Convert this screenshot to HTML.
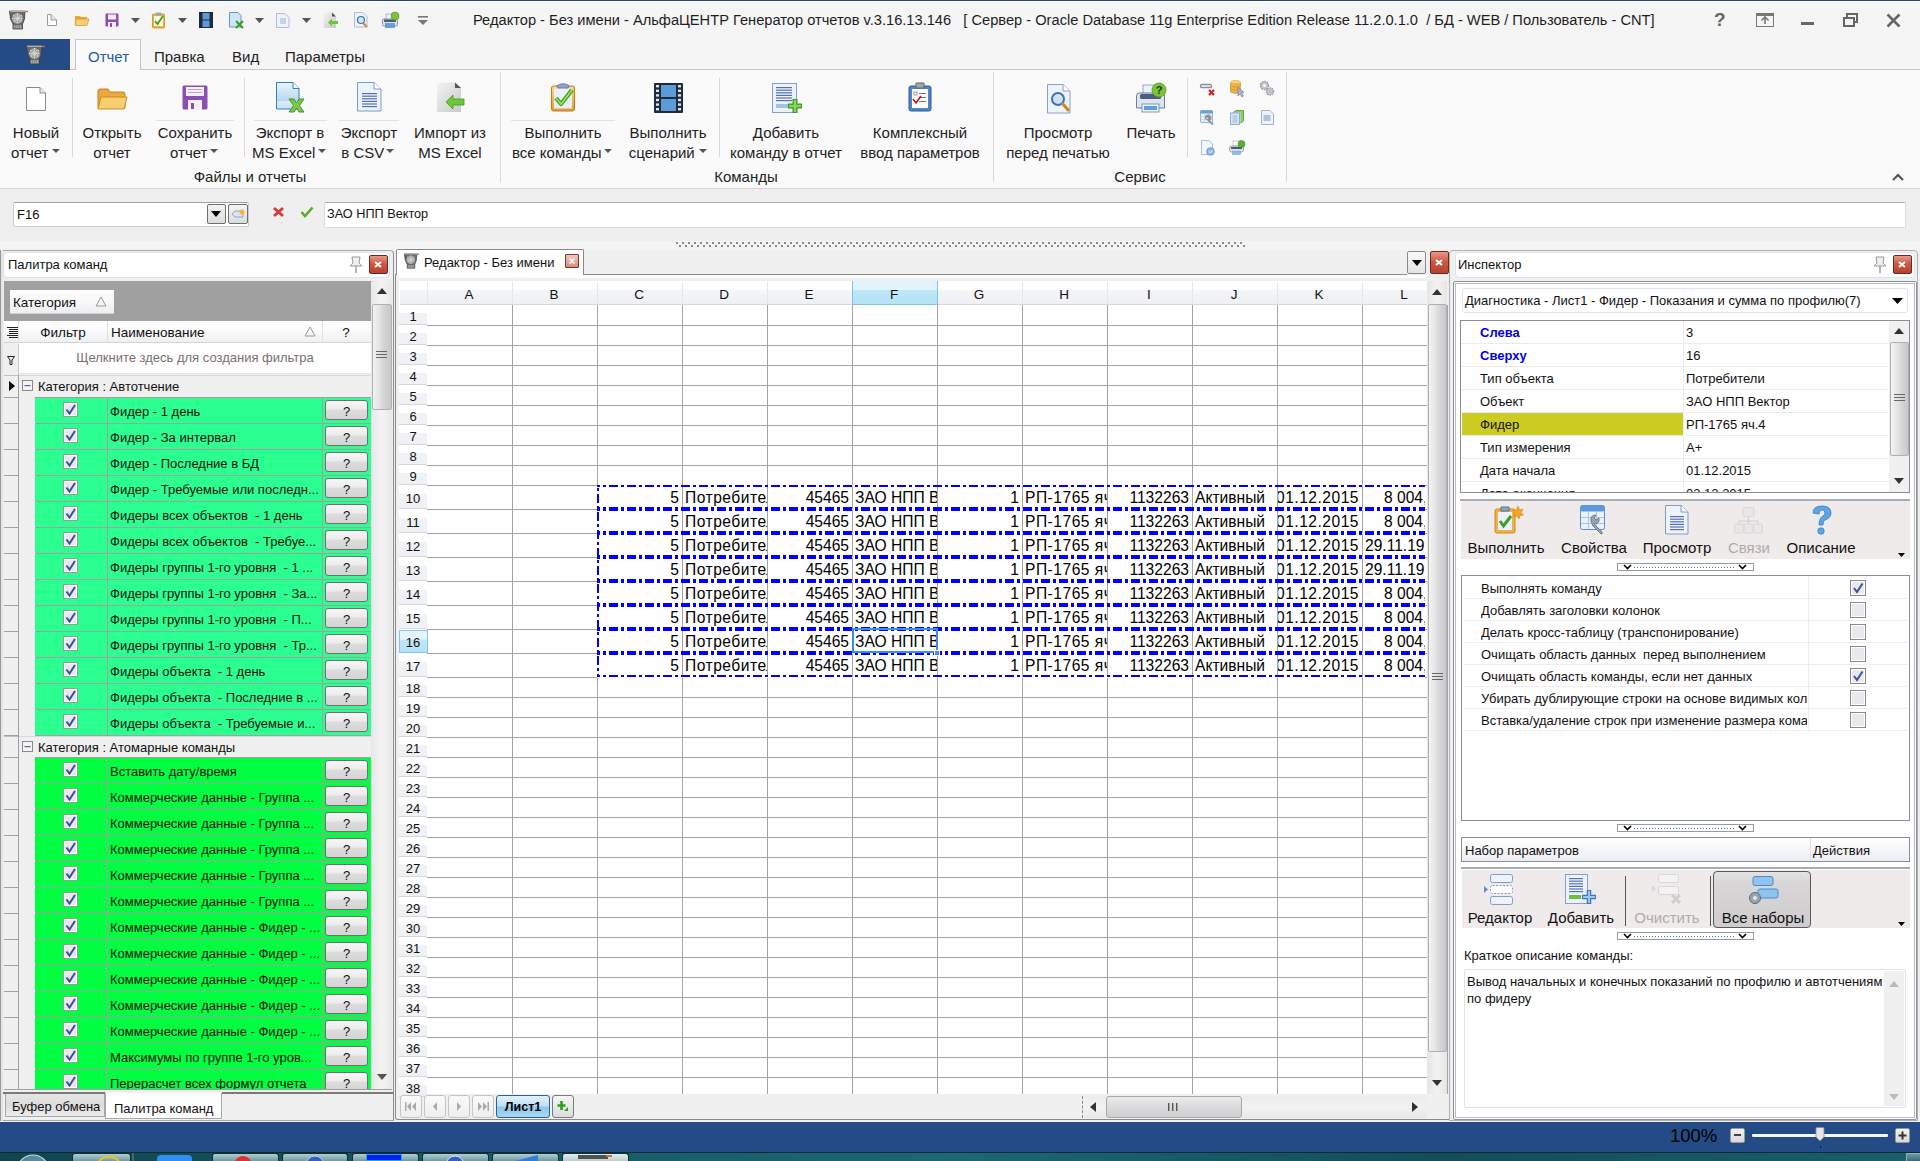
<!DOCTYPE html><html><head><meta charset="utf-8"><style>
*{margin:0;padding:0;box-sizing:border-box}
html,body{width:1920px;height:1161px;overflow:hidden;background:#f0f0f0;font-family:"Liberation Sans",sans-serif;color:#000}
div{position:absolute}
.t{white-space:nowrap;line-height:1}
svg{position:absolute;overflow:visible}
</style></head><body>

<div style="left:0px;top:0px;width:1920px;height:39px;background:#f5f5f5"></div>
<div style="left:0px;top:0px;width:1920px;height:1px;background:#24467a"></div>
<div style="left:0px;top:1px;width:1920px;height:1px;background:#ffffff"></div>
<svg style="left:9px;top:10px;" width="20" height="20" viewBox="0 0 20 20"><g transform="scale(1.0)"><path d="M0.5 1 H16 L15.5 9 L13.5 14 V19 H4 V14 L1.5 9Z" fill="#6a6a6a" stroke="#3a3a3a" stroke-width="0.8"/><circle cx="8.5" cy="8.5" r="5.8" fill="#a8a8a8" stroke="#555" stroke-width="0.6"/><path d="M4 5 L13 12 M13 5 L4 12 M8.5 3 V14 M3 8.5 H14" stroke="#e8e8e8" stroke-width="1" stroke-dasharray="1.2 1"/><circle cx="8.5" cy="8.5" r="2" fill="#d0d0d0"/><rect x="4.5" y="15" width="8.5" height="3.5" fill="#8a8a8a"/><path d="M5 16 H12 M5 17.5 H12" stroke="#c8c8c8" stroke-width="0.6" stroke-dasharray="1 1"/><path d="M16 1.5 H19" stroke="#d06a1a" stroke-width="1.4"/><path d="M1 1.2 H16" stroke="#d8d8d8" stroke-width="1"/></g></svg>
<svg style="left:47px;top:14px;" width="10" height="12" viewBox="0 0 10 12"><path d="M0.5 0.5 H4 L9.5 6 V11.5 H0.5 Z" fill="#fff" stroke="#9a9a9a"/><path d="M4 0.5 V6 H9.5" fill="#e8e8e8" stroke="#9a9a9a"/></svg>
<svg style="left:74px;top:14px;" width="16" height="12" viewBox="0 0 16 12"><path d="M1 2 H6 L7 3 H13 V11 H1Z" fill="#e9a93c"/><path d="M2 5 H15 L13 11.5 H1Z" fill="#f7cf70" stroke="#d18a22" stroke-width="0.6"/></svg>
<svg style="left:105px;top:13px;" width="14" height="14" viewBox="0 0 14 14"><rect x="0.5" y="0.5" width="13" height="13" rx="1" fill="#8b4fb0"/><rect x="3" y="1.5" width="8" height="5" fill="#f0eef4"/><rect x="3" y="9" width="8" height="5" fill="#f0eef4"/><rect x="5" y="10" width="2" height="4" fill="#8b4fb0"/></svg>
<svg style="left:131px;top:18px;" width="9" height="5" viewBox="0 0 9 5"><path d="M0 0 H9 L4.5 5Z" fill="#555"/></svg>
<svg style="left:152px;top:12px;" width="13" height="16" viewBox="0 0 13 16"><rect x="0.5" y="2" width="12" height="14" rx="1" fill="#f2b144" stroke="#c98a1f" stroke-width="0.8"/><rect x="2" y="4" width="9" height="10" fill="#fff8e8"/><path d="M3 9 L5.5 12 L11 4" stroke="#34a420" stroke-width="1.8" fill="none"/><rect x="4" y="0.5" width="5" height="3" fill="#8fa5c8"/></svg>
<svg style="left:178px;top:18px;" width="9" height="5" viewBox="0 0 9 5"><path d="M0 0 H9 L4.5 5Z" fill="#555"/></svg>
<svg style="left:199px;top:12px;" width="14" height="16" viewBox="0 0 14 16"><rect x="0" y="0" width="14" height="16" fill="#1e2a3e"/><rect x="3.5" y="1" width="7" height="6.5" fill="#5b9bd8"/><rect x="3.5" y="8.5" width="7" height="6.5" fill="#5b9bd8"/></svg>
<svg style="left:229px;top:12px;" width="15" height="16" viewBox="0 0 15 16"><path d="M0.5 0.5 H9 L12 3.5 V15 H0.5Z" fill="#cfe6f4" stroke="#3f83c2" stroke-width="0.8"/><path d="M7 9 L14 16 M14 9 L7 16" stroke="#3a9d2a" stroke-width="2"/></svg>
<svg style="left:255px;top:18px;" width="9" height="5" viewBox="0 0 9 5"><path d="M0 0 H9 L4.5 5Z" fill="#555"/></svg>
<svg style="left:276px;top:13px;" width="14" height="15" viewBox="0 0 14 15"><path d="M0.5 0.5 H9 L13 4.5 V14.5 H0.5Z" fill="#eef3fb" stroke="#9cb0d6" stroke-width="0.8"/><rect x="4" y="5" width="6" height="6" fill="#c5d3ea"/></svg>
<svg style="left:302px;top:18px;" width="9" height="5" viewBox="0 0 9 5"><path d="M0 0 H9 L4.5 5Z" fill="#555"/></svg>
<svg style="left:323px;top:12px;" width="16" height="17" viewBox="0 0 16 17"><defs><linearGradient id="gimq" x1="0" y1="0" x2="1" y2="1"><stop offset="0" stop-color="#f4f4f4"/><stop offset="1" stop-color="#c8c8c8"/></linearGradient></defs><path d="M0.5 0.5 H9 L13 4.5 V16 H0.5Z" fill="url(#gimq)"/><path d="M9 0.5 L13 4.5 H9Z" fill="#555"/><path d="M5 10.5 L9 6.5 V9 H15 V12 H9 V14.5Z" fill="#6cc834"/></svg>
<svg style="left:354px;top:12px;" width="14" height="16" viewBox="0 0 14 16"><path d="M0.5 0.5 H9 L13 4.5 V15 H0.5Z" fill="#eef3fb" stroke="#9cb0d6" stroke-width="0.8"/><circle cx="7" cy="8" r="3.5" fill="#cfe4f8" stroke="#3b73b9" stroke-width="1.2"/><path d="M9 11 L13 15" stroke="#c9882c" stroke-width="1.8"/></svg>
<svg style="left:382px;top:12px;" width="17" height="16" viewBox="0 0 17 16"><rect x="4" y="2" width="8" height="6" fill="#eef2f8" stroke="#7f93b8" stroke-width="0.6"/><rect x="0.5" y="7" width="15" height="7" rx="1.5" fill="#dce5f2" stroke="#6a7fa8" stroke-width="0.8"/><rect x="2" y="7.5" width="12" height="2.5" fill="#4f5d7c"/><rect x="3.5" y="11.5" width="9" height="4" fill="#5aa0e6" stroke="#6a7fa8" stroke-width="0.6"/><circle cx="13" cy="4" r="4" fill="#7cc23a" stroke="#4c9a1a" stroke-width="0.6"/></svg>
<svg style="left:418px;top:16px;" width="10" height="9" viewBox="0 0 10 9"><rect x="0" y="0" width="10" height="1.6" fill="#777"/><path d="M0 4 H10 L5 9Z" fill="#777"/></svg>
<div class="t" style="left:473px;top:13px;font-size:14.65px;color:#1e1e1e;">Редактор - Без имени - АльфаЦЕНТР Генератор отчетов v.3.16.13.146&nbsp;&nbsp; [ Сервер - Oracle Database 11g Enterprise Edition Release 11.2.0.1.0&nbsp; / БД - WEB / Пользователь - CNT]</div>
<div class="t" style="left:1714px;top:10px;font-size:19px;font-weight:bold;color:#666">?</div>
<svg style="left:1756px;top:13px;" width="18" height="14" viewBox="0 0 18 14"><rect x="0.5" y="0.5" width="17" height="13" fill="none" stroke="#777"/><rect x="0.5" y="0.5" width="17" height="2.5" fill="#777"/><path d="M9 4 V11 M5.5 7.5 L9 4 L12.5 7.5" stroke="#777" stroke-width="1.6" fill="none"/></svg>
<div style="left:1801px;top:22px;width:13px;height:3px;background:#666"></div>
<svg style="left:1843px;top:13px;" width="15" height="14" viewBox="0 0 15 14"><rect x="4" y="1" width="10" height="8" fill="none" stroke="#666" stroke-width="2"/><rect x="1" y="5" width="10" height="8" fill="#f5f5f5" stroke="#666" stroke-width="2"/></svg>
<svg style="left:1886px;top:13px;" width="15" height="15" viewBox="0 0 15 15"><path d="M1.5 1.5 L13.5 13.5 M13.5 1.5 L1.5 13.5" stroke="#666" stroke-width="2.6"/></svg>
<div style="left:0px;top:39px;width:1920px;height:31px;background:#f5f5f5"></div>
<div style="left:70px;top:69px;width:1850px;height:1px;background:#c6c6c6"></div>
<div style="left:0px;top:39px;width:70px;height:31px;background:#254b87"></div>
<svg style="left:26px;top:45px;" width="20" height="20" viewBox="0 0 20 20"><g transform="scale(1.0)"><path d="M0.5 1 H16 L15.5 9 L13.5 14 V19 H4 V14 L1.5 9Z" fill="#6a6a6a" stroke="#3a3a3a" stroke-width="0.8"/><circle cx="8.5" cy="8.5" r="5.8" fill="#a8a8a8" stroke="#555" stroke-width="0.6"/><path d="M4 5 L13 12 M13 5 L4 12 M8.5 3 V14 M3 8.5 H14" stroke="#e8e8e8" stroke-width="1" stroke-dasharray="1.2 1"/><circle cx="8.5" cy="8.5" r="2" fill="#d0d0d0"/><rect x="4.5" y="15" width="8.5" height="3.5" fill="#8a8a8a"/><path d="M5 16 H12 M5 17.5 H12" stroke="#c8c8c8" stroke-width="0.6" stroke-dasharray="1 1"/><path d="M16 1.5 H19" stroke="#d06a1a" stroke-width="1.4"/><path d="M1 1.2 H16" stroke="#d8d8d8" stroke-width="1"/></g></svg>
<div style="left:75px;top:39px;width:66px;height:31px;background:#fafafa;border:1px solid #c6c6c6;border-bottom:none"></div>
<div class="t" style="left:88px;top:49px;font-size:15px;color:#2b5ba8">Отчет</div>
<div class="t" style="left:154px;top:49px;font-size:15px;color:#222">Правка</div>
<div class="t" style="left:232px;top:49px;font-size:15px;color:#222">Вид</div>
<div class="t" style="left:285px;top:49px;font-size:15px;color:#222">Параметры</div>
<div style="left:0px;top:70px;width:1920px;height:118px;background:#fafafa"></div>
<div style="left:0px;top:188px;width:1920px;height:1px;background:#d5d5d5"></div>
<svg style="left:26px;top:87px;" width="20" height="24" viewBox="0 0 20 24"><path d="M0.5 0.5 H14 L19.5 6 V23.5 H0.5 Z" fill="#fff" stroke="#8a8a8a"/><path d="M14 0.5 V6 H19.5" fill="#e8e8e8" stroke="#8a8a8a"/></svg>
<div class="t" style="left:-264px;width:600px;text-align:center;top:125px;font-size:15px;color:#222">Новый</div>
<div class="t" style="left:-264px;width:600px;text-align:center;top:145px;font-size:15px;color:#222">отчет&nbsp;&nbsp;&nbsp;</div>
<svg style="left:52px;top:149px;" width="8" height="4" viewBox="0 0 8 4"><path d="M0 0 H8 L4 4Z" fill="#555"/></svg>
<div style="left:72px;top:78px;width:1px;height:79px;background:#d8d8d8"></div>
<svg style="left:97px;top:88px;" width="31" height="22" viewBox="0 0 31 22"><path d="M1 3 Q1 1 3 1 H11 L13 4 H26 Q28 4 28 6 V20 H1 Z" fill="#e9a93c" stroke="#c9801e"/><path d="M4 9 H30 L27 21 H1 Z" fill="#f7cf70" stroke="#d18a22"/></svg>
<div class="t" style="left:-188px;width:600px;text-align:center;top:125px;font-size:15px;color:#222">Открыть</div>
<div class="t" style="left:-188px;width:600px;text-align:center;top:145px;font-size:15px;color:#222">отчет</div>
<svg style="left:182px;top:85px;" width="26" height="25" viewBox="0 0 26 25"><rect x="0.5" y="0.5" width="25" height="24" rx="1.5" fill="#8b4fb0"/><rect x="4" y="2" width="18" height="9" fill="#f4f1f6"/><rect x="6" y="4" width="14" height="1" fill="#b8a8c8"/><rect x="6" y="7" width="14" height="1" fill="#b8a8c8"/><rect x="6" y="15" width="14" height="10" fill="#f4f1f6"/><rect x="9" y="18" width="3" height="6" fill="#8b4fb0"/></svg>
<div style="left:156px;top:120px;width:78px;height:1px;background:#e2e2e2"></div>
<div class="t" style="left:-105px;width:600px;text-align:center;top:125px;font-size:15px;color:#222">Сохранить</div>
<div class="t" style="left:-105px;width:600px;text-align:center;top:145px;font-size:15px;color:#222">отчет&nbsp;&nbsp;&nbsp;</div>
<svg style="left:210px;top:149px;" width="8" height="4" viewBox="0 0 8 4"><path d="M0 0 H8 L4 4Z" fill="#555"/></svg>
<div style="left:244px;top:78px;width:1px;height:79px;background:#d8d8d8"></div>
<svg style="left:276px;top:82px;" width="29" height="31" viewBox="0 0 29 31"><defs><linearGradient id="gex" x1="0" y1="0" x2="0" y2="1"><stop offset="0" stop-color="#e8f4fb"/><stop offset="0.7" stop-color="#b8d8ee"/><stop offset="0.72" stop-color="#d8ecf8"/><stop offset="1" stop-color="#c8e2f4"/></linearGradient></defs><path d="M0.5 0.5 H17 L23 6.5 V27 H0.5 Z" fill="url(#gex)" stroke="#2f7fc8"/><path d="M17 0.5 V6.5 H23" fill="#fff" stroke="#2f7fc8"/><path d="M13 17 H18 L20.5 21 L23 17 H28 L23.5 23.5 L28 30 H23 L20.5 26 L18 30 H13 L17.5 23.5Z" fill="#7cc848" stroke="#3a8a20" stroke-width="0.9"/></svg>
<div style="left:254px;top:120px;width:73px;height:1px;background:#e2e2e2"></div>
<div class="t" style="left:-10px;width:600px;text-align:center;top:125px;font-size:15px;color:#222">Экспорт в</div>
<div class="t" style="left:-10px;width:600px;text-align:center;top:145px;font-size:15px;color:#222">MS Excel&nbsp;&nbsp;&nbsp;</div>
<svg style="left:318px;top:149px;" width="8" height="4" viewBox="0 0 8 4"><path d="M0 0 H8 L4 4Z" fill="#555"/></svg>
<svg style="left:357px;top:82px;" width="25" height="30" viewBox="0 0 25 30"><path d="M0.5 0.5 H17 L24 7 V29 H0.5 Z" fill="#eef3fb" stroke="#7f9bd0"/><path d="M17 0.5 V7 H24" fill="#fff" stroke="#7f9bd0"/><rect x="5" y="11.0" width="15" height="1.2" fill="#5572b0"/><rect x="5" y="13.6" width="15" height="1.2" fill="#5572b0"/><rect x="5" y="16.2" width="15" height="1.2" fill="#5572b0"/><rect x="5" y="18.8" width="15" height="1.2" fill="#5572b0"/><rect x="5" y="21.4" width="15" height="1.2" fill="#5572b0"/><rect x="5" y="24.0" width="15" height="1.2" fill="#5572b0"/></svg>
<div style="left:339px;top:120px;width:60px;height:1px;background:#e2e2e2"></div>
<div class="t" style="left:69px;width:600px;text-align:center;top:125px;font-size:15px;color:#222">Экспорт</div>
<div class="t" style="left:69px;width:600px;text-align:center;top:145px;font-size:15px;color:#222">в CSV&nbsp;&nbsp;&nbsp;</div>
<svg style="left:386px;top:149px;" width="8" height="4" viewBox="0 0 8 4"><path d="M0 0 H8 L4 4Z" fill="#555"/></svg>
<svg style="left:435px;top:82px;" width="30" height="31" viewBox="0 0 30 31"><defs><linearGradient id="gimp" x1="0" y1="0" x2="1" y2="1"><stop offset="0" stop-color="#f4f4f4"/><stop offset="1" stop-color="#c8c8c8"/></linearGradient></defs><path d="M2 0.5 H20 L26 6 V30 H2 Z" fill="url(#gimp)"/><path d="M20 0.5 L26 6 H20Z" fill="#555"/><path d="M11 20 L18 13 V17 H29 V23 H18 V27 Z" fill="#6cc834" stroke="#3e9a18" stroke-width="0.8"/></svg>
<div class="t" style="left:150px;width:600px;text-align:center;top:125px;font-size:15px;color:#222">Импорт из</div>
<div class="t" style="left:150px;width:600px;text-align:center;top:145px;font-size:15px;color:#222">MS Excel</div>
<div class="t" style="left:-50px;width:600px;text-align:center;top:169px;font-size:15px;color:#222">Файлы и отчеты</div>
<div style="left:500px;top:72px;width:1px;height:110px;background:#d8d8d8"></div>
<svg style="left:551px;top:83px;" width="24" height="29" viewBox="0 0 24 29"><defs><linearGradient id="gcl" x1="0" y1="0" x2="0" y2="1"><stop offset="0" stop-color="#fbd98a"/><stop offset="1" stop-color="#e39a30"/></linearGradient></defs><rect x="0.5" y="3" width="23" height="25" rx="2" fill="url(#gcl)" stroke="#c47a18"/><rect x="3" y="5.5" width="18" height="20" fill="#eaf0f8"/><path d="M6.0 2.5 Q12.0 -1 18.0 2.5 L17.0 5 H7.0Z" fill="#8fa5c8" stroke="#5b6f93" stroke-width="0.8"/><path d="M5 15 L10 21 L21 7" stroke="#3f9a1e" stroke-width="4.2" fill="none" stroke-linejoin="round"/><path d="M5 15 L10 21 L21 7" stroke="#9ee05e" stroke-width="1.8" fill="none"/></svg>
<div style="left:511px;top:120px;width:104px;height:1px;background:#e2e2e2"></div>
<div class="t" style="left:263px;width:600px;text-align:center;top:125px;font-size:15px;color:#222">Выполнить</div>
<div class="t" style="left:263px;width:600px;text-align:center;top:145px;font-size:15px;color:#222">все команды&nbsp;&nbsp;&nbsp;</div>
<svg style="left:604px;top:149px;" width="8" height="4" viewBox="0 0 8 4"><path d="M0 0 H8 L4 4Z" fill="#555"/></svg>
<svg style="left:654px;top:83px;" width="29" height="30" viewBox="0 0 29 30"><rect x="0" y="0" width="29" height="30" rx="1" fill="#1e2a3e"/><rect x="7" y="2" width="15" height="12" fill="#5b9bd8"/><rect x="7" y="16" width="15" height="12" fill="#5b9bd8"/><rect x="2" y="2.0" width="3" height="2.4" fill="#dfe6ef"/><rect x="24" y="2.0" width="3" height="2.4" fill="#dfe6ef"/><rect x="2" y="6.6" width="3" height="2.4" fill="#dfe6ef"/><rect x="24" y="6.6" width="3" height="2.4" fill="#dfe6ef"/><rect x="2" y="11.2" width="3" height="2.4" fill="#dfe6ef"/><rect x="24" y="11.2" width="3" height="2.4" fill="#dfe6ef"/><rect x="2" y="15.799999999999999" width="3" height="2.4" fill="#dfe6ef"/><rect x="24" y="15.799999999999999" width="3" height="2.4" fill="#dfe6ef"/><rect x="2" y="20.4" width="3" height="2.4" fill="#dfe6ef"/><rect x="24" y="20.4" width="3" height="2.4" fill="#dfe6ef"/><rect x="2" y="25.0" width="3" height="2.4" fill="#dfe6ef"/><rect x="24" y="25.0" width="3" height="2.4" fill="#dfe6ef"/></svg>
<div class="t" style="left:368px;width:600px;text-align:center;top:125px;font-size:15px;color:#222">Выполнить</div>
<div class="t" style="left:368px;width:600px;text-align:center;top:145px;font-size:15px;color:#222">сценарий&nbsp;&nbsp;&nbsp;</div>
<svg style="left:699px;top:149px;" width="8" height="4" viewBox="0 0 8 4"><path d="M0 0 H8 L4 4Z" fill="#555"/></svg>
<div style="left:719px;top:78px;width:1px;height:79px;background:#d8d8d8"></div>
<svg style="left:772px;top:83px;" width="31" height="31" viewBox="0 0 31 31"><rect x="0.5" y="0.5" width="24" height="29" fill="#eef3fb" stroke="#8aa0c8"/><rect x="4" y="4.0" width="16" height="1.2" fill="#5572b0"/><rect x="4" y="6.6" width="16" height="1.2" fill="#5572b0"/><rect x="4" y="9.2" width="16" height="1.2" fill="#5572b0"/><rect x="4" y="11.8" width="16" height="1.2" fill="#5572b0"/><rect x="4" y="14.4" width="16" height="1.2" fill="#5572b0"/><rect x="4" y="17.0" width="16" height="1.2" fill="#5572b0"/><rect x="4" y="21" width="14" height="4" fill="#9fc3e8"/><path d="M23 16 V30 M16 23 H30" stroke="#3d9a20" stroke-width="5"/><path d="M23 17 V29 M17 23 H29" stroke="#8bd45e" stroke-width="2.4"/></svg>
<div class="t" style="left:486px;width:600px;text-align:center;top:125px;font-size:15px;color:#222">Добавить</div>
<div class="t" style="left:486px;width:600px;text-align:center;top:145px;font-size:15px;color:#222">команду в отчет</div>
<svg style="left:908px;top:82px;" width="24" height="30" viewBox="0 0 24 30"><rect x="1" y="4" width="22" height="25" rx="2" fill="#4f86c6" stroke="#2a5b99"/><rect x="4" y="7" width="16" height="19" fill="#fff"/><path d="M8 1 H16 V6 H8Z" fill="#9aa" stroke="#666"/><rect x="6" y="10" width="3" height="3" fill="none" stroke="#888" stroke-width="0.8"/><rect x="11" y="11" width="7" height="1" fill="#777"/><rect x="11" y="15" width="7" height="1" fill="#777"/><rect x="11" y="19" width="7" height="1" fill="#777"/><path d="M5 17 L8 21 L13 14" stroke="#d01010" stroke-width="1.6" fill="none"/></svg>
<div class="t" style="left:620px;width:600px;text-align:center;top:125px;font-size:15px;color:#222">Комплексный</div>
<div class="t" style="left:620px;width:600px;text-align:center;top:145px;font-size:15px;color:#222">ввод параметров</div>
<div class="t" style="left:446px;width:600px;text-align:center;top:169px;font-size:15px;color:#222">Команды</div>
<div style="left:993px;top:72px;width:1px;height:110px;background:#d8d8d8"></div>
<svg style="left:1047px;top:84px;" width="24" height="30" viewBox="0 0 24 30"><path d="M0.5 0.5 H16 L23 7 V29 H0.5 Z" fill="#eef3fb" stroke="#8aa0c8"/><path d="M16 0.5 V7 H23" fill="#fff" stroke="#8aa0c8"/><circle cx="11" cy="15" r="6" fill="#cfe4f8" stroke="#3b73b9" stroke-width="2"/><path d="M15 19 L22 27" stroke="#c9882c" stroke-width="3"/></svg>
<div class="t" style="left:758px;width:600px;text-align:center;top:125px;font-size:15px;color:#222">Просмотр</div>
<div class="t" style="left:758px;width:600px;text-align:center;top:145px;font-size:15px;color:#222">перед печатью</div>
<svg style="left:1136px;top:83px;" width="30" height="30" viewBox="0 0 30 30"><rect x="7" y="2" width="14" height="10" fill="#eef2f8" stroke="#7f93b8" stroke-width="0.8"/><path d="M0.5 13 Q0.5 10 3.5 10 H25.5 Q28.5 10 28.5 13 V25 H0.5Z" fill="#dce5f2" stroke="#6a7fa8"/><rect x="4" y="11" width="21" height="5" rx="1.5" fill="#4f5d7c"/><rect x="6" y="21" width="17" height="8" fill="#eef3fa" stroke="#6a7fa8" stroke-width="0.8"/><rect x="8" y="23" width="13" height="4" fill="#5aa0e6"/><circle cx="23" cy="7" r="7" fill="#7cc23a" stroke="#4c9a1a" stroke-width="0.8"/><text x="23" y="11" font-size="11" font-weight="bold" text-anchor="middle" fill="#1e3a10" font-family="Liberation Sans">?</text></svg>
<div class="t" style="left:851px;width:600px;text-align:center;top:125px;font-size:15px;color:#222">Печать</div>
<div style="left:1187px;top:78px;width:1px;height:79px;background:#d8d8d8"></div>
<svg style="left:1199px;top:82px;" width="16" height="14" viewBox="0 0 16 14"><path d="M3 4 H11" stroke="#8a8e96" stroke-width="4.5" stroke-linecap="round"/><path d="M3 4 H11" stroke="#d8dce2" stroke-width="2" stroke-linecap="round"/><path d="M10 8 L15 13 M15 8 L10 13" stroke="#d42020" stroke-width="2.2"/></svg>
<svg style="left:1230px;top:80px;" width="16" height="17" viewBox="0 0 16 17"><ellipse cx="5.5" cy="3" rx="5" ry="2.5" fill="#f8d77a" stroke="#d09a30" stroke-width="0.6"/><path d="M0.5 3 V12 Q5.5 15 10.5 12 V3" fill="#eeb445" stroke="#c98a25" stroke-width="0.6"/><path d="M0.5 6 Q5.5 8.5 10.5 6 M0.5 9 Q5.5 11.5 10.5 9" stroke="#c98a25" stroke-width="0.6" fill="none"/><path d="M8 7 V16 L10 14 L12 17 L13.5 16 L11.5 13 L14 12.5Z" fill="#a8b4c8" stroke="#6a7890" stroke-width="0.6"/></svg>
<svg style="left:1259px;top:80px;" width="16" height="16" viewBox="0 0 16 16"><circle cx="5.5" cy="5.5" r="4" fill="#c8c8c8" stroke="#9a9a9a" stroke-width="1.6" stroke-dasharray="1.6 1"/><circle cx="5.5" cy="5.5" r="1.6" fill="#f4f4f4"/><circle cx="11" cy="11.5" r="3.6" fill="#c0c4cc" stroke="#9a9ea6" stroke-width="1.4" stroke-dasharray="1.4 0.9"/></svg>
<svg style="left:1200px;top:110px;" width="15" height="15" viewBox="0 0 15 15"><rect x="0.5" y="0.5" width="12" height="12" rx="1" fill="#eef2f8" stroke="#7f9bd0" stroke-width="0.8"/><rect x="0.5" y="0.5" width="12" height="3" fill="#6aa0dc"/><path d="M4.5 3.5 V12.5 M8.5 3.5 V12.5 M0.5 6.5 H12.5 M0.5 9.5 H12.5" stroke="#b8cce8" stroke-width="0.6"/><path d="M6 9 Q5 5 9 5.5 L8 7 L9 8 L10.5 7 Q11 10 8 10 L13 14.5" stroke="#8a929c" stroke-width="1.8" fill="none"/></svg>
<svg style="left:1230px;top:110px;" width="15" height="15" viewBox="0 0 15 15"><path d="M4 2 L6 0.5 H13.5 V11 L11 13" fill="#8ed06a" stroke="#4aa02a" stroke-width="0.8"/><path d="M3 2 H11 V13 H3Z" fill="#d8e8d0" stroke="#70b050" stroke-width="0.6"/><rect x="0.5" y="3" width="9" height="11.5" fill="#dae6f4" stroke="#7f9bd0" stroke-width="0.8"/><rect x="2.5" y="5" width="5" height="8" fill="#b8cde8"/></svg>
<svg style="left:1261px;top:110px;" width="13" height="15" viewBox="0 0 13 15"><path d="M0.5 0.5 H9 L12.5 4 V14.5 H0.5Z" fill="#eef3fb" stroke="#8aa0c8" stroke-width="0.8"/><rect x="2.5" y="5" width="7" height="6" fill="#b0c2de"/></svg>
<svg style="left:1201px;top:140px;" width="15" height="16" viewBox="0 0 15 16"><path d="M0.5 0.5 H8 L11.5 4 V14.5 H0.5Z" fill="#f2f5fa" stroke="#9cb0d6" stroke-width="0.8"/><circle cx="9.5" cy="11.5" r="3.8" fill="#8cb8ec" stroke="#5a8ad0" stroke-width="0.8"/><path d="M7.5 11.5 L9.5 13 L11.5 10" stroke="#fff" stroke-width="0.8" fill="none"/></svg>
<svg style="left:1229px;top:140px;" width="17" height="16" viewBox="0 0 17 16"><rect x="4" y="1" width="8" height="5" fill="#fff" stroke="#9aa" stroke-width="0.6"/><rect x="0.5" y="6" width="14" height="6" rx="2" fill="#dfe4ec" stroke="#8a98aa" stroke-width="0.8"/><rect x="2" y="7" width="11" height="2" fill="#4a5a78"/><rect x="3.5" y="11" width="8" height="3.5" fill="#8cc0ec" stroke="#8a98aa" stroke-width="0.5"/><circle cx="12.5" cy="4" r="3.5" fill="#5cb030" stroke="#3a8a18" stroke-width="0.6"/></svg>
<div style="left:1286px;top:72px;width:1px;height:110px;background:#d8d8d8"></div>
<div class="t" style="left:840px;width:600px;text-align:center;top:169px;font-size:15px;color:#222">Сервис</div>
<svg style="left:1892px;top:173px;" width="12" height="8" viewBox="0 0 12 8"><path d="M1 7 L6 2 L11 7" stroke="#555" stroke-width="2.2" fill="none"/></svg>
<div style="left:0px;top:189px;width:1920px;height:52px;background:#efefef"></div>
<div style="left:0px;top:241px;width:1920px;height:9px;background:#f4f4f4"></div>
<svg style="left:676px;top:242px;" width="570" height="6" viewBox="0 0 570 6"><rect x="0" y="0" width="2" height="2" fill="#8a8a8a"/><rect x="3" y="3" width="2" height="2" fill="#8a8a8a"/><rect x="6" y="0" width="2" height="2" fill="#8a8a8a"/><rect x="9" y="3" width="2" height="2" fill="#8a8a8a"/><rect x="12" y="0" width="2" height="2" fill="#8a8a8a"/><rect x="15" y="3" width="2" height="2" fill="#8a8a8a"/><rect x="18" y="0" width="2" height="2" fill="#8a8a8a"/><rect x="21" y="3" width="2" height="2" fill="#8a8a8a"/><rect x="24" y="0" width="2" height="2" fill="#8a8a8a"/><rect x="27" y="3" width="2" height="2" fill="#8a8a8a"/><rect x="30" y="0" width="2" height="2" fill="#8a8a8a"/><rect x="33" y="3" width="2" height="2" fill="#8a8a8a"/><rect x="36" y="0" width="2" height="2" fill="#8a8a8a"/><rect x="39" y="3" width="2" height="2" fill="#8a8a8a"/><rect x="42" y="0" width="2" height="2" fill="#8a8a8a"/><rect x="45" y="3" width="2" height="2" fill="#8a8a8a"/><rect x="48" y="0" width="2" height="2" fill="#8a8a8a"/><rect x="51" y="3" width="2" height="2" fill="#8a8a8a"/><rect x="54" y="0" width="2" height="2" fill="#8a8a8a"/><rect x="57" y="3" width="2" height="2" fill="#8a8a8a"/><rect x="60" y="0" width="2" height="2" fill="#8a8a8a"/><rect x="63" y="3" width="2" height="2" fill="#8a8a8a"/><rect x="66" y="0" width="2" height="2" fill="#8a8a8a"/><rect x="69" y="3" width="2" height="2" fill="#8a8a8a"/><rect x="72" y="0" width="2" height="2" fill="#8a8a8a"/><rect x="75" y="3" width="2" height="2" fill="#8a8a8a"/><rect x="78" y="0" width="2" height="2" fill="#8a8a8a"/><rect x="81" y="3" width="2" height="2" fill="#8a8a8a"/><rect x="84" y="0" width="2" height="2" fill="#8a8a8a"/><rect x="87" y="3" width="2" height="2" fill="#8a8a8a"/><rect x="90" y="0" width="2" height="2" fill="#8a8a8a"/><rect x="93" y="3" width="2" height="2" fill="#8a8a8a"/><rect x="96" y="0" width="2" height="2" fill="#8a8a8a"/><rect x="99" y="3" width="2" height="2" fill="#8a8a8a"/><rect x="102" y="0" width="2" height="2" fill="#8a8a8a"/><rect x="105" y="3" width="2" height="2" fill="#8a8a8a"/><rect x="108" y="0" width="2" height="2" fill="#8a8a8a"/><rect x="111" y="3" width="2" height="2" fill="#8a8a8a"/><rect x="114" y="0" width="2" height="2" fill="#8a8a8a"/><rect x="117" y="3" width="2" height="2" fill="#8a8a8a"/><rect x="120" y="0" width="2" height="2" fill="#8a8a8a"/><rect x="123" y="3" width="2" height="2" fill="#8a8a8a"/><rect x="126" y="0" width="2" height="2" fill="#8a8a8a"/><rect x="129" y="3" width="2" height="2" fill="#8a8a8a"/><rect x="132" y="0" width="2" height="2" fill="#8a8a8a"/><rect x="135" y="3" width="2" height="2" fill="#8a8a8a"/><rect x="138" y="0" width="2" height="2" fill="#8a8a8a"/><rect x="141" y="3" width="2" height="2" fill="#8a8a8a"/><rect x="144" y="0" width="2" height="2" fill="#8a8a8a"/><rect x="147" y="3" width="2" height="2" fill="#8a8a8a"/><rect x="150" y="0" width="2" height="2" fill="#8a8a8a"/><rect x="153" y="3" width="2" height="2" fill="#8a8a8a"/><rect x="156" y="0" width="2" height="2" fill="#8a8a8a"/><rect x="159" y="3" width="2" height="2" fill="#8a8a8a"/><rect x="162" y="0" width="2" height="2" fill="#8a8a8a"/><rect x="165" y="3" width="2" height="2" fill="#8a8a8a"/><rect x="168" y="0" width="2" height="2" fill="#8a8a8a"/><rect x="171" y="3" width="2" height="2" fill="#8a8a8a"/><rect x="174" y="0" width="2" height="2" fill="#8a8a8a"/><rect x="177" y="3" width="2" height="2" fill="#8a8a8a"/><rect x="180" y="0" width="2" height="2" fill="#8a8a8a"/><rect x="183" y="3" width="2" height="2" fill="#8a8a8a"/><rect x="186" y="0" width="2" height="2" fill="#8a8a8a"/><rect x="189" y="3" width="2" height="2" fill="#8a8a8a"/><rect x="192" y="0" width="2" height="2" fill="#8a8a8a"/><rect x="195" y="3" width="2" height="2" fill="#8a8a8a"/><rect x="198" y="0" width="2" height="2" fill="#8a8a8a"/><rect x="201" y="3" width="2" height="2" fill="#8a8a8a"/><rect x="204" y="0" width="2" height="2" fill="#8a8a8a"/><rect x="207" y="3" width="2" height="2" fill="#8a8a8a"/><rect x="210" y="0" width="2" height="2" fill="#8a8a8a"/><rect x="213" y="3" width="2" height="2" fill="#8a8a8a"/><rect x="216" y="0" width="2" height="2" fill="#8a8a8a"/><rect x="219" y="3" width="2" height="2" fill="#8a8a8a"/><rect x="222" y="0" width="2" height="2" fill="#8a8a8a"/><rect x="225" y="3" width="2" height="2" fill="#8a8a8a"/><rect x="228" y="0" width="2" height="2" fill="#8a8a8a"/><rect x="231" y="3" width="2" height="2" fill="#8a8a8a"/><rect x="234" y="0" width="2" height="2" fill="#8a8a8a"/><rect x="237" y="3" width="2" height="2" fill="#8a8a8a"/><rect x="240" y="0" width="2" height="2" fill="#8a8a8a"/><rect x="243" y="3" width="2" height="2" fill="#8a8a8a"/><rect x="246" y="0" width="2" height="2" fill="#8a8a8a"/><rect x="249" y="3" width="2" height="2" fill="#8a8a8a"/><rect x="252" y="0" width="2" height="2" fill="#8a8a8a"/><rect x="255" y="3" width="2" height="2" fill="#8a8a8a"/><rect x="258" y="0" width="2" height="2" fill="#8a8a8a"/><rect x="261" y="3" width="2" height="2" fill="#8a8a8a"/><rect x="264" y="0" width="2" height="2" fill="#8a8a8a"/><rect x="267" y="3" width="2" height="2" fill="#8a8a8a"/><rect x="270" y="0" width="2" height="2" fill="#8a8a8a"/><rect x="273" y="3" width="2" height="2" fill="#8a8a8a"/><rect x="276" y="0" width="2" height="2" fill="#8a8a8a"/><rect x="279" y="3" width="2" height="2" fill="#8a8a8a"/><rect x="282" y="0" width="2" height="2" fill="#8a8a8a"/><rect x="285" y="3" width="2" height="2" fill="#8a8a8a"/><rect x="288" y="0" width="2" height="2" fill="#8a8a8a"/><rect x="291" y="3" width="2" height="2" fill="#8a8a8a"/><rect x="294" y="0" width="2" height="2" fill="#8a8a8a"/><rect x="297" y="3" width="2" height="2" fill="#8a8a8a"/><rect x="300" y="0" width="2" height="2" fill="#8a8a8a"/><rect x="303" y="3" width="2" height="2" fill="#8a8a8a"/><rect x="306" y="0" width="2" height="2" fill="#8a8a8a"/><rect x="309" y="3" width="2" height="2" fill="#8a8a8a"/><rect x="312" y="0" width="2" height="2" fill="#8a8a8a"/><rect x="315" y="3" width="2" height="2" fill="#8a8a8a"/><rect x="318" y="0" width="2" height="2" fill="#8a8a8a"/><rect x="321" y="3" width="2" height="2" fill="#8a8a8a"/><rect x="324" y="0" width="2" height="2" fill="#8a8a8a"/><rect x="327" y="3" width="2" height="2" fill="#8a8a8a"/><rect x="330" y="0" width="2" height="2" fill="#8a8a8a"/><rect x="333" y="3" width="2" height="2" fill="#8a8a8a"/><rect x="336" y="0" width="2" height="2" fill="#8a8a8a"/><rect x="339" y="3" width="2" height="2" fill="#8a8a8a"/><rect x="342" y="0" width="2" height="2" fill="#8a8a8a"/><rect x="345" y="3" width="2" height="2" fill="#8a8a8a"/><rect x="348" y="0" width="2" height="2" fill="#8a8a8a"/><rect x="351" y="3" width="2" height="2" fill="#8a8a8a"/><rect x="354" y="0" width="2" height="2" fill="#8a8a8a"/><rect x="357" y="3" width="2" height="2" fill="#8a8a8a"/><rect x="360" y="0" width="2" height="2" fill="#8a8a8a"/><rect x="363" y="3" width="2" height="2" fill="#8a8a8a"/><rect x="366" y="0" width="2" height="2" fill="#8a8a8a"/><rect x="369" y="3" width="2" height="2" fill="#8a8a8a"/><rect x="372" y="0" width="2" height="2" fill="#8a8a8a"/><rect x="375" y="3" width="2" height="2" fill="#8a8a8a"/><rect x="378" y="0" width="2" height="2" fill="#8a8a8a"/><rect x="381" y="3" width="2" height="2" fill="#8a8a8a"/><rect x="384" y="0" width="2" height="2" fill="#8a8a8a"/><rect x="387" y="3" width="2" height="2" fill="#8a8a8a"/><rect x="390" y="0" width="2" height="2" fill="#8a8a8a"/><rect x="393" y="3" width="2" height="2" fill="#8a8a8a"/><rect x="396" y="0" width="2" height="2" fill="#8a8a8a"/><rect x="399" y="3" width="2" height="2" fill="#8a8a8a"/><rect x="402" y="0" width="2" height="2" fill="#8a8a8a"/><rect x="405" y="3" width="2" height="2" fill="#8a8a8a"/><rect x="408" y="0" width="2" height="2" fill="#8a8a8a"/><rect x="411" y="3" width="2" height="2" fill="#8a8a8a"/><rect x="414" y="0" width="2" height="2" fill="#8a8a8a"/><rect x="417" y="3" width="2" height="2" fill="#8a8a8a"/><rect x="420" y="0" width="2" height="2" fill="#8a8a8a"/><rect x="423" y="3" width="2" height="2" fill="#8a8a8a"/><rect x="426" y="0" width="2" height="2" fill="#8a8a8a"/><rect x="429" y="3" width="2" height="2" fill="#8a8a8a"/><rect x="432" y="0" width="2" height="2" fill="#8a8a8a"/><rect x="435" y="3" width="2" height="2" fill="#8a8a8a"/><rect x="438" y="0" width="2" height="2" fill="#8a8a8a"/><rect x="441" y="3" width="2" height="2" fill="#8a8a8a"/><rect x="444" y="0" width="2" height="2" fill="#8a8a8a"/><rect x="447" y="3" width="2" height="2" fill="#8a8a8a"/><rect x="450" y="0" width="2" height="2" fill="#8a8a8a"/><rect x="453" y="3" width="2" height="2" fill="#8a8a8a"/><rect x="456" y="0" width="2" height="2" fill="#8a8a8a"/><rect x="459" y="3" width="2" height="2" fill="#8a8a8a"/><rect x="462" y="0" width="2" height="2" fill="#8a8a8a"/><rect x="465" y="3" width="2" height="2" fill="#8a8a8a"/><rect x="468" y="0" width="2" height="2" fill="#8a8a8a"/><rect x="471" y="3" width="2" height="2" fill="#8a8a8a"/><rect x="474" y="0" width="2" height="2" fill="#8a8a8a"/><rect x="477" y="3" width="2" height="2" fill="#8a8a8a"/><rect x="480" y="0" width="2" height="2" fill="#8a8a8a"/><rect x="483" y="3" width="2" height="2" fill="#8a8a8a"/><rect x="486" y="0" width="2" height="2" fill="#8a8a8a"/><rect x="489" y="3" width="2" height="2" fill="#8a8a8a"/><rect x="492" y="0" width="2" height="2" fill="#8a8a8a"/><rect x="495" y="3" width="2" height="2" fill="#8a8a8a"/><rect x="498" y="0" width="2" height="2" fill="#8a8a8a"/><rect x="501" y="3" width="2" height="2" fill="#8a8a8a"/><rect x="504" y="0" width="2" height="2" fill="#8a8a8a"/><rect x="507" y="3" width="2" height="2" fill="#8a8a8a"/><rect x="510" y="0" width="2" height="2" fill="#8a8a8a"/><rect x="513" y="3" width="2" height="2" fill="#8a8a8a"/><rect x="516" y="0" width="2" height="2" fill="#8a8a8a"/><rect x="519" y="3" width="2" height="2" fill="#8a8a8a"/><rect x="522" y="0" width="2" height="2" fill="#8a8a8a"/><rect x="525" y="3" width="2" height="2" fill="#8a8a8a"/><rect x="528" y="0" width="2" height="2" fill="#8a8a8a"/><rect x="531" y="3" width="2" height="2" fill="#8a8a8a"/><rect x="534" y="0" width="2" height="2" fill="#8a8a8a"/><rect x="537" y="3" width="2" height="2" fill="#8a8a8a"/><rect x="540" y="0" width="2" height="2" fill="#8a8a8a"/><rect x="543" y="3" width="2" height="2" fill="#8a8a8a"/><rect x="546" y="0" width="2" height="2" fill="#8a8a8a"/><rect x="549" y="3" width="2" height="2" fill="#8a8a8a"/><rect x="552" y="0" width="2" height="2" fill="#8a8a8a"/><rect x="555" y="3" width="2" height="2" fill="#8a8a8a"/><rect x="558" y="0" width="2" height="2" fill="#8a8a8a"/><rect x="561" y="3" width="2" height="2" fill="#8a8a8a"/><rect x="564" y="0" width="2" height="2" fill="#8a8a8a"/><rect x="567" y="3" width="2" height="2" fill="#8a8a8a"/></svg>
<div style="left:13px;top:202px;width:236px;height:25px;background:#fff;border:1px solid #c8ccd4;border-top-color:#9aa0a8;border-radius:2px"></div>
<div class="t" style="left:17px;top:208px;font-size:13px;color:#111">F16</div>
<div style="left:207px;top:204px;width:19px;height:20px;background:linear-gradient(#f4f4f4,#dcdcdc);border:1px solid #6e6e6e;border-radius:2px"></div>
<svg style="left:211px;top:211px;" width="10" height="6" viewBox="0 0 10 6"><path d="M0 0 H10 L5 6Z" fill="#000"/></svg>
<div style="left:228px;top:204px;width:20px;height:20px;background:linear-gradient(#f4f4f4,#dcdcdc);border:1px solid #6e6e6e;border-radius:2px"></div>
<svg style="left:231px;top:209px;" width="14" height="10" viewBox="0 0 14 10"><path d="M4 2 H12 V8 H4 L1 5Z" fill="#dbe4f0" stroke="#7f97b8" stroke-width="0.8"/><circle cx="11" cy="3" r="2.5" fill="#f5b638"/></svg>
<svg style="left:272px;top:206px;" width="13" height="12" viewBox="0 0 13 12"><path d="M2 2 L11 10 M11 2 L2 10" stroke="#d83a3a" stroke-width="3"/></svg>
<svg style="left:300px;top:206px;" width="14" height="12" viewBox="0 0 14 12"><path d="M1.5 6 L5 10 L12.5 1.5" stroke="#5aaa2a" stroke-width="2.6" fill="none"/></svg>
<div style="left:324px;top:202px;width:1582px;height:26px;background:#fff;border:1px solid #d8dde4;border-top-color:#a8acb2;border-radius:2px"></div>
<div class="t" style="left:327px;top:208px;font-size:12.7px;color:#111">ЗАО НПП Вектор</div>
<div style="left:0px;top:250px;width:394px;height:871px;background:#f0f0f0;border:1px solid #a8a8a8;border-right-color:#8c8c8c;border-radius:4px 4px 0 0"></div>
<div style="left:0px;top:250px;width:3px;height:871px;background:#e4e4e4;border-left:1px solid #999"></div>
<div style="left:3px;top:252px;width:387px;height:26px;background:#fff;border:1px solid #dbe3ec;border-radius:4px"></div>
<div class="t" style="left:8px;top:258px;font-size:13px;color:#111">Палитра команд</div>
<svg style="left:349px;top:256px;" width="14" height="17" viewBox="0 0 14 17"><path d="M3 1 H11 L10 7 L13 10 H1 L4 7Z" fill="#f0f0f0" stroke="#9a9a9a"/><path d="M7 10 V17" stroke="#9a9a9a" stroke-width="1.4"/></svg>
<div style="left:369px;top:255px;width:19px;height:19px;background:linear-gradient(#e69a8a 0%,#cf5a44 45%,#b8402c 100%);border:1px solid #6a2a20;border-radius:2px"></div>
<svg style="left:374px;top:261px;" width="8" height="7" viewBox="0 0 8 7"><path d="M1 1 L7 6 M7 1 L1 6" stroke="#fff" stroke-width="2"/></svg>
<div style="left:4px;top:281px;width:368px;height:809px;background:#f0f0f0"></div>
<div style="left:4px;top:281px;width:368px;height:40px;background:#a0a0a0"></div>
<div style="left:10px;top:290px;width:104px;height:24px;background:linear-gradient(#ffffff 0%,#f7f7f7 55%,#eceef2 100%);border-bottom:1px solid #d0d0d0"></div>
<div class="t" style="left:13px;top:296px;font-size:13.5px;color:#111">Категория</div>
<svg style="left:95px;top:296px;" width="12" height="11" viewBox="0 0 12 11"><path d="M6 1 L11 10 H1Z" fill="none" stroke="#9a9a9a"/></svg>
<div style="left:4px;top:321px;width:368px;height:22px;background:linear-gradient(#ffffff 0%,#fbfbfb 40%,#eef0f3 100%);border-bottom:1px solid #d4d4d4"></div>
<div style="left:18px;top:321px;width:1px;height:22px;background:#e0e0e0"></div>
<div style="left:107px;top:321px;width:1px;height:22px;background:#e0e0e0"></div>
<div style="left:322px;top:321px;width:1px;height:22px;background:#e0e0e0"></div>
<svg style="left:7px;top:327px;" width="11" height="11" viewBox="0 0 11 11"><rect x="0" y="0" width="11" height="1" fill="#222"/><rect x="2" y="2" width="9" height="1" fill="#222"/><rect x="2" y="4" width="9" height="1" fill="#222"/><rect x="2" y="6" width="9" height="1" fill="#222"/><rect x="0" y="8" width="11" height="1" fill="#222"/><rect x="2" y="10" width="9" height="1" fill="#222"/></svg>
<div class="t" style="left:-237px;width:600px;text-align:center;top:326px;font-size:13.5px;color:#111">Фильтр</div>
<div class="t" style="left:111px;top:326px;font-size:13.5px;color:#111">Наименование</div>
<svg style="left:304px;top:326px;" width="12" height="11" viewBox="0 0 12 11"><path d="M6 1 L11 10 H1Z" fill="none" stroke="#9a9a9a"/></svg>
<div class="t" style="left:46px;width:600px;text-align:center;top:326px;font-size:13.5px;color:#111">?</div>
<div style="left:4px;top:343px;width:368px;height:32px;background:#f0f0f0"></div>
<div style="left:19px;top:343px;width:353px;height:31px;background:#fff;border-bottom:1px solid #e4e4e4"></div>
<div style="left:18px;top:344px;width:1px;height:31px;background:#c8c8c8"></div>
<svg style="left:7px;top:356px;" width="8" height="9" viewBox="0 0 8 9"><path d="M0.5 0.5 H7.5 L5 4 V8.5 H3 V4Z" fill="none" stroke="#222"/></svg>
<div class="t" style="left:-105px;width:600px;text-align:center;top:351px;font-size:13px;color:#7a7070">Щелкните здесь для создания фильтра</div>
<div style="left:4px;top:375px;width:14px;height:1px;background:#c0c0c0"></div>
<div style="left:19px;top:375px;width:353px;height:22px;background:#f0f0f0;border-top:1px solid #d8d8d8"></div>
<div style="left:4px;top:375px;width:14px;height:1px;background:#c0c0c0"></div>
<svg style="left:9px;top:381px;" width="6" height="10" viewBox="0 0 6 10"><path d="M0 0 L6 5 L0 10Z" fill="#000"/></svg>
<svg style="left:22px;top:380px;" width="11" height="11" viewBox="0 0 11 11"><rect x="0.5" y="0.5" width="10" height="10" fill="#f4f4f4" stroke="#8a8a8a"/><rect x="2.5" y="5" width="6" height="1.2" fill="#4a6aa0"/></svg>
<div class="t" style="left:38px;top:380px;font-size:13px;color:#111">Категория : Автотчение</div>
<div style="left:35px;top:397px;width:336px;height:339px;overflow:hidden"><div style="left:0;top:0;width:336px;height:339px;background:#2aff90"></div><div style="left:0;top:0px;width:336px;height:1px;background:#a0a0a0"></div><svg style="left:28px;top:5px" width="16" height="16"><rect x="0.5" y="0.5" width="14" height="14" fill="#fff" stroke="#9a9a9a"/><rect x="2" y="2" width="11" height="11" fill="#e8e9ee"/><path d="M3.5 7.5 L6.5 11.5 L12 3" stroke="#3a4f9a" stroke-width="2" fill="none"/></svg><div class="t" style="left:75px;top:8px;font-size:13px;color:#111">Фидер - 1 день</div><div style="left:290px;top:3px;width:43px;height:20px;background:linear-gradient(#f6f6f6 0%,#ececec 45%,#dcdcdc 50%,#d4d4d4 100%);border:1px solid #707070;border-radius:3px"></div><div class="t" style="left:290px;width:43px;text-align:center;top:8px;font-size:13px;color:#111">?</div><div style="left:0;top:26px;width:336px;height:1px;background:#a0a0a0"></div><svg style="left:28px;top:31px" width="16" height="16"><rect x="0.5" y="0.5" width="14" height="14" fill="#fff" stroke="#9a9a9a"/><rect x="2" y="2" width="11" height="11" fill="#e8e9ee"/><path d="M3.5 7.5 L6.5 11.5 L12 3" stroke="#3a4f9a" stroke-width="2" fill="none"/></svg><div class="t" style="left:75px;top:34px;font-size:13px;color:#111">Фидер - За интервал</div><div style="left:290px;top:29px;width:43px;height:20px;background:linear-gradient(#f6f6f6 0%,#ececec 45%,#dcdcdc 50%,#d4d4d4 100%);border:1px solid #707070;border-radius:3px"></div><div class="t" style="left:290px;width:43px;text-align:center;top:34px;font-size:13px;color:#111">?</div><div style="left:0;top:52px;width:336px;height:1px;background:#a0a0a0"></div><svg style="left:28px;top:57px" width="16" height="16"><rect x="0.5" y="0.5" width="14" height="14" fill="#fff" stroke="#9a9a9a"/><rect x="2" y="2" width="11" height="11" fill="#e8e9ee"/><path d="M3.5 7.5 L6.5 11.5 L12 3" stroke="#3a4f9a" stroke-width="2" fill="none"/></svg><div class="t" style="left:75px;top:60px;font-size:13px;color:#111">Фидер - Последние в БД</div><div style="left:290px;top:55px;width:43px;height:20px;background:linear-gradient(#f6f6f6 0%,#ececec 45%,#dcdcdc 50%,#d4d4d4 100%);border:1px solid #707070;border-radius:3px"></div><div class="t" style="left:290px;width:43px;text-align:center;top:60px;font-size:13px;color:#111">?</div><div style="left:0;top:78px;width:336px;height:1px;background:#a0a0a0"></div><svg style="left:28px;top:83px" width="16" height="16"><rect x="0.5" y="0.5" width="14" height="14" fill="#fff" stroke="#9a9a9a"/><rect x="2" y="2" width="11" height="11" fill="#e8e9ee"/><path d="M3.5 7.5 L6.5 11.5 L12 3" stroke="#3a4f9a" stroke-width="2" fill="none"/></svg><div class="t" style="left:75px;top:86px;font-size:13px;color:#111">Фидер - Требуемые или последн...</div><div style="left:290px;top:81px;width:43px;height:20px;background:linear-gradient(#f6f6f6 0%,#ececec 45%,#dcdcdc 50%,#d4d4d4 100%);border:1px solid #707070;border-radius:3px"></div><div class="t" style="left:290px;width:43px;text-align:center;top:86px;font-size:13px;color:#111">?</div><div style="left:0;top:104px;width:336px;height:1px;background:#a0a0a0"></div><svg style="left:28px;top:109px" width="16" height="16"><rect x="0.5" y="0.5" width="14" height="14" fill="#fff" stroke="#9a9a9a"/><rect x="2" y="2" width="11" height="11" fill="#e8e9ee"/><path d="M3.5 7.5 L6.5 11.5 L12 3" stroke="#3a4f9a" stroke-width="2" fill="none"/></svg><div class="t" style="left:75px;top:112px;font-size:13px;color:#111">Фидеры всех объектов&nbsp; - 1 день</div><div style="left:290px;top:107px;width:43px;height:20px;background:linear-gradient(#f6f6f6 0%,#ececec 45%,#dcdcdc 50%,#d4d4d4 100%);border:1px solid #707070;border-radius:3px"></div><div class="t" style="left:290px;width:43px;text-align:center;top:112px;font-size:13px;color:#111">?</div><div style="left:0;top:130px;width:336px;height:1px;background:#a0a0a0"></div><svg style="left:28px;top:135px" width="16" height="16"><rect x="0.5" y="0.5" width="14" height="14" fill="#fff" stroke="#9a9a9a"/><rect x="2" y="2" width="11" height="11" fill="#e8e9ee"/><path d="M3.5 7.5 L6.5 11.5 L12 3" stroke="#3a4f9a" stroke-width="2" fill="none"/></svg><div class="t" style="left:75px;top:138px;font-size:13px;color:#111">Фидеры всех объектов&nbsp; - Требуе...</div><div style="left:290px;top:133px;width:43px;height:20px;background:linear-gradient(#f6f6f6 0%,#ececec 45%,#dcdcdc 50%,#d4d4d4 100%);border:1px solid #707070;border-radius:3px"></div><div class="t" style="left:290px;width:43px;text-align:center;top:138px;font-size:13px;color:#111">?</div><div style="left:0;top:156px;width:336px;height:1px;background:#a0a0a0"></div><svg style="left:28px;top:161px" width="16" height="16"><rect x="0.5" y="0.5" width="14" height="14" fill="#fff" stroke="#9a9a9a"/><rect x="2" y="2" width="11" height="11" fill="#e8e9ee"/><path d="M3.5 7.5 L6.5 11.5 L12 3" stroke="#3a4f9a" stroke-width="2" fill="none"/></svg><div class="t" style="left:75px;top:164px;font-size:13px;color:#111">Фидеры группы 1-го уровня&nbsp; - 1 ...</div><div style="left:290px;top:159px;width:43px;height:20px;background:linear-gradient(#f6f6f6 0%,#ececec 45%,#dcdcdc 50%,#d4d4d4 100%);border:1px solid #707070;border-radius:3px"></div><div class="t" style="left:290px;width:43px;text-align:center;top:164px;font-size:13px;color:#111">?</div><div style="left:0;top:182px;width:336px;height:1px;background:#a0a0a0"></div><svg style="left:28px;top:187px" width="16" height="16"><rect x="0.5" y="0.5" width="14" height="14" fill="#fff" stroke="#9a9a9a"/><rect x="2" y="2" width="11" height="11" fill="#e8e9ee"/><path d="M3.5 7.5 L6.5 11.5 L12 3" stroke="#3a4f9a" stroke-width="2" fill="none"/></svg><div class="t" style="left:75px;top:190px;font-size:13px;color:#111">Фидеры группы 1-го уровня&nbsp; - За...</div><div style="left:290px;top:185px;width:43px;height:20px;background:linear-gradient(#f6f6f6 0%,#ececec 45%,#dcdcdc 50%,#d4d4d4 100%);border:1px solid #707070;border-radius:3px"></div><div class="t" style="left:290px;width:43px;text-align:center;top:190px;font-size:13px;color:#111">?</div><div style="left:0;top:208px;width:336px;height:1px;background:#a0a0a0"></div><svg style="left:28px;top:213px" width="16" height="16"><rect x="0.5" y="0.5" width="14" height="14" fill="#fff" stroke="#9a9a9a"/><rect x="2" y="2" width="11" height="11" fill="#e8e9ee"/><path d="M3.5 7.5 L6.5 11.5 L12 3" stroke="#3a4f9a" stroke-width="2" fill="none"/></svg><div class="t" style="left:75px;top:216px;font-size:13px;color:#111">Фидеры группы 1-го уровня&nbsp; - П...</div><div style="left:290px;top:211px;width:43px;height:20px;background:linear-gradient(#f6f6f6 0%,#ececec 45%,#dcdcdc 50%,#d4d4d4 100%);border:1px solid #707070;border-radius:3px"></div><div class="t" style="left:290px;width:43px;text-align:center;top:216px;font-size:13px;color:#111">?</div><div style="left:0;top:234px;width:336px;height:1px;background:#a0a0a0"></div><svg style="left:28px;top:239px" width="16" height="16"><rect x="0.5" y="0.5" width="14" height="14" fill="#fff" stroke="#9a9a9a"/><rect x="2" y="2" width="11" height="11" fill="#e8e9ee"/><path d="M3.5 7.5 L6.5 11.5 L12 3" stroke="#3a4f9a" stroke-width="2" fill="none"/></svg><div class="t" style="left:75px;top:242px;font-size:13px;color:#111">Фидеры группы 1-го уровня&nbsp; - Тр...</div><div style="left:290px;top:237px;width:43px;height:20px;background:linear-gradient(#f6f6f6 0%,#ececec 45%,#dcdcdc 50%,#d4d4d4 100%);border:1px solid #707070;border-radius:3px"></div><div class="t" style="left:290px;width:43px;text-align:center;top:242px;font-size:13px;color:#111">?</div><div style="left:0;top:260px;width:336px;height:1px;background:#a0a0a0"></div><svg style="left:28px;top:265px" width="16" height="16"><rect x="0.5" y="0.5" width="14" height="14" fill="#fff" stroke="#9a9a9a"/><rect x="2" y="2" width="11" height="11" fill="#e8e9ee"/><path d="M3.5 7.5 L6.5 11.5 L12 3" stroke="#3a4f9a" stroke-width="2" fill="none"/></svg><div class="t" style="left:75px;top:268px;font-size:13px;color:#111">Фидеры объекта&nbsp; - 1 день</div><div style="left:290px;top:263px;width:43px;height:20px;background:linear-gradient(#f6f6f6 0%,#ececec 45%,#dcdcdc 50%,#d4d4d4 100%);border:1px solid #707070;border-radius:3px"></div><div class="t" style="left:290px;width:43px;text-align:center;top:268px;font-size:13px;color:#111">?</div><div style="left:0;top:286px;width:336px;height:1px;background:#a0a0a0"></div><svg style="left:28px;top:291px" width="16" height="16"><rect x="0.5" y="0.5" width="14" height="14" fill="#fff" stroke="#9a9a9a"/><rect x="2" y="2" width="11" height="11" fill="#e8e9ee"/><path d="M3.5 7.5 L6.5 11.5 L12 3" stroke="#3a4f9a" stroke-width="2" fill="none"/></svg><div class="t" style="left:75px;top:294px;font-size:13px;color:#111">Фидеры объекта&nbsp; - Последние в ...</div><div style="left:290px;top:289px;width:43px;height:20px;background:linear-gradient(#f6f6f6 0%,#ececec 45%,#dcdcdc 50%,#d4d4d4 100%);border:1px solid #707070;border-radius:3px"></div><div class="t" style="left:290px;width:43px;text-align:center;top:294px;font-size:13px;color:#111">?</div><div style="left:0;top:312px;width:336px;height:1px;background:#a0a0a0"></div><svg style="left:28px;top:317px" width="16" height="16"><rect x="0.5" y="0.5" width="14" height="14" fill="#fff" stroke="#9a9a9a"/><rect x="2" y="2" width="11" height="11" fill="#e8e9ee"/><path d="M3.5 7.5 L6.5 11.5 L12 3" stroke="#3a4f9a" stroke-width="2" fill="none"/></svg><div class="t" style="left:75px;top:320px;font-size:13px;color:#111">Фидеры объекта&nbsp; - Требуемые и...</div><div style="left:290px;top:315px;width:43px;height:20px;background:linear-gradient(#f6f6f6 0%,#ececec 45%,#dcdcdc 50%,#d4d4d4 100%);border:1px solid #707070;border-radius:3px"></div><div class="t" style="left:290px;width:43px;text-align:center;top:320px;font-size:13px;color:#111">?</div><div style="left:0;top:338px;width:336px;height:1px;background:#a0a0a0"></div><div style="left:72px;top:0;width:1px;height:338px;background:#a0a0a0"></div><div style="left:287px;top:0;width:1px;height:338px;background:#a0a0a0"></div></div>
<div style="left:4px;top:397px;width:14px;height:1px;background:#a0a0a0"></div>
<div style="left:4px;top:423px;width:14px;height:1px;background:#a0a0a0"></div>
<div style="left:4px;top:449px;width:14px;height:1px;background:#a0a0a0"></div>
<div style="left:4px;top:475px;width:14px;height:1px;background:#a0a0a0"></div>
<div style="left:4px;top:501px;width:14px;height:1px;background:#a0a0a0"></div>
<div style="left:4px;top:527px;width:14px;height:1px;background:#a0a0a0"></div>
<div style="left:4px;top:553px;width:14px;height:1px;background:#a0a0a0"></div>
<div style="left:4px;top:579px;width:14px;height:1px;background:#a0a0a0"></div>
<div style="left:4px;top:605px;width:14px;height:1px;background:#a0a0a0"></div>
<div style="left:4px;top:631px;width:14px;height:1px;background:#a0a0a0"></div>
<div style="left:4px;top:657px;width:14px;height:1px;background:#a0a0a0"></div>
<div style="left:4px;top:683px;width:14px;height:1px;background:#a0a0a0"></div>
<div style="left:4px;top:709px;width:14px;height:1px;background:#a0a0a0"></div>
<div style="left:4px;top:735px;width:14px;height:1px;background:#a0a0a0"></div>
<div style="left:19px;top:736px;width:353px;height:22px;background:#f0f0f0;border-top:1px solid #d8d8d8"></div>
<div style="left:4px;top:736px;width:14px;height:1px;background:#c0c0c0"></div>
<svg style="left:22px;top:741px;" width="11" height="11" viewBox="0 0 11 11"><rect x="0.5" y="0.5" width="10" height="10" fill="#f4f4f4" stroke="#8a8a8a"/><rect x="2.5" y="5" width="6" height="1.2" fill="#4a6aa0"/></svg>
<div class="t" style="left:38px;top:741px;font-size:13px;color:#111">Категория : Атомарные команды</div>
<div style="left:35px;top:757px;width:336px;height:333px;overflow:hidden"><div style="left:0;top:0;width:336px;height:339px;background:#00ff40"></div><div style="left:0;top:0px;width:336px;height:1px;background:#a0a0a0"></div><svg style="left:28px;top:5px" width="16" height="16"><rect x="0.5" y="0.5" width="14" height="14" fill="#fff" stroke="#9a9a9a"/><rect x="2" y="2" width="11" height="11" fill="#e8e9ee"/><path d="M3.5 7.5 L6.5 11.5 L12 3" stroke="#3a4f9a" stroke-width="2" fill="none"/></svg><div class="t" style="left:75px;top:8px;font-size:13px;color:#111">Вставить дату/время</div><div style="left:290px;top:3px;width:43px;height:20px;background:linear-gradient(#f6f6f6 0%,#ececec 45%,#dcdcdc 50%,#d4d4d4 100%);border:1px solid #707070;border-radius:3px"></div><div class="t" style="left:290px;width:43px;text-align:center;top:8px;font-size:13px;color:#111">?</div><div style="left:0;top:26px;width:336px;height:1px;background:#a0a0a0"></div><svg style="left:28px;top:31px" width="16" height="16"><rect x="0.5" y="0.5" width="14" height="14" fill="#fff" stroke="#9a9a9a"/><rect x="2" y="2" width="11" height="11" fill="#e8e9ee"/><path d="M3.5 7.5 L6.5 11.5 L12 3" stroke="#3a4f9a" stroke-width="2" fill="none"/></svg><div class="t" style="left:75px;top:34px;font-size:13px;color:#111">Коммерческие данные - Группа ...</div><div style="left:290px;top:29px;width:43px;height:20px;background:linear-gradient(#f6f6f6 0%,#ececec 45%,#dcdcdc 50%,#d4d4d4 100%);border:1px solid #707070;border-radius:3px"></div><div class="t" style="left:290px;width:43px;text-align:center;top:34px;font-size:13px;color:#111">?</div><div style="left:0;top:52px;width:336px;height:1px;background:#a0a0a0"></div><svg style="left:28px;top:57px" width="16" height="16"><rect x="0.5" y="0.5" width="14" height="14" fill="#fff" stroke="#9a9a9a"/><rect x="2" y="2" width="11" height="11" fill="#e8e9ee"/><path d="M3.5 7.5 L6.5 11.5 L12 3" stroke="#3a4f9a" stroke-width="2" fill="none"/></svg><div class="t" style="left:75px;top:60px;font-size:13px;color:#111">Коммерческие данные - Группа ...</div><div style="left:290px;top:55px;width:43px;height:20px;background:linear-gradient(#f6f6f6 0%,#ececec 45%,#dcdcdc 50%,#d4d4d4 100%);border:1px solid #707070;border-radius:3px"></div><div class="t" style="left:290px;width:43px;text-align:center;top:60px;font-size:13px;color:#111">?</div><div style="left:0;top:78px;width:336px;height:1px;background:#a0a0a0"></div><svg style="left:28px;top:83px" width="16" height="16"><rect x="0.5" y="0.5" width="14" height="14" fill="#fff" stroke="#9a9a9a"/><rect x="2" y="2" width="11" height="11" fill="#e8e9ee"/><path d="M3.5 7.5 L6.5 11.5 L12 3" stroke="#3a4f9a" stroke-width="2" fill="none"/></svg><div class="t" style="left:75px;top:86px;font-size:13px;color:#111">Коммерческие данные - Группа ...</div><div style="left:290px;top:81px;width:43px;height:20px;background:linear-gradient(#f6f6f6 0%,#ececec 45%,#dcdcdc 50%,#d4d4d4 100%);border:1px solid #707070;border-radius:3px"></div><div class="t" style="left:290px;width:43px;text-align:center;top:86px;font-size:13px;color:#111">?</div><div style="left:0;top:104px;width:336px;height:1px;background:#a0a0a0"></div><svg style="left:28px;top:109px" width="16" height="16"><rect x="0.5" y="0.5" width="14" height="14" fill="#fff" stroke="#9a9a9a"/><rect x="2" y="2" width="11" height="11" fill="#e8e9ee"/><path d="M3.5 7.5 L6.5 11.5 L12 3" stroke="#3a4f9a" stroke-width="2" fill="none"/></svg><div class="t" style="left:75px;top:112px;font-size:13px;color:#111">Коммерческие данные - Группа ...</div><div style="left:290px;top:107px;width:43px;height:20px;background:linear-gradient(#f6f6f6 0%,#ececec 45%,#dcdcdc 50%,#d4d4d4 100%);border:1px solid #707070;border-radius:3px"></div><div class="t" style="left:290px;width:43px;text-align:center;top:112px;font-size:13px;color:#111">?</div><div style="left:0;top:130px;width:336px;height:1px;background:#a0a0a0"></div><svg style="left:28px;top:135px" width="16" height="16"><rect x="0.5" y="0.5" width="14" height="14" fill="#fff" stroke="#9a9a9a"/><rect x="2" y="2" width="11" height="11" fill="#e8e9ee"/><path d="M3.5 7.5 L6.5 11.5 L12 3" stroke="#3a4f9a" stroke-width="2" fill="none"/></svg><div class="t" style="left:75px;top:138px;font-size:13px;color:#111">Коммерческие данные - Группа ...</div><div style="left:290px;top:133px;width:43px;height:20px;background:linear-gradient(#f6f6f6 0%,#ececec 45%,#dcdcdc 50%,#d4d4d4 100%);border:1px solid #707070;border-radius:3px"></div><div class="t" style="left:290px;width:43px;text-align:center;top:138px;font-size:13px;color:#111">?</div><div style="left:0;top:156px;width:336px;height:1px;background:#a0a0a0"></div><svg style="left:28px;top:161px" width="16" height="16"><rect x="0.5" y="0.5" width="14" height="14" fill="#fff" stroke="#9a9a9a"/><rect x="2" y="2" width="11" height="11" fill="#e8e9ee"/><path d="M3.5 7.5 L6.5 11.5 L12 3" stroke="#3a4f9a" stroke-width="2" fill="none"/></svg><div class="t" style="left:75px;top:164px;font-size:13px;color:#111">Коммерческие данные - Фидер - ...</div><div style="left:290px;top:159px;width:43px;height:20px;background:linear-gradient(#f6f6f6 0%,#ececec 45%,#dcdcdc 50%,#d4d4d4 100%);border:1px solid #707070;border-radius:3px"></div><div class="t" style="left:290px;width:43px;text-align:center;top:164px;font-size:13px;color:#111">?</div><div style="left:0;top:182px;width:336px;height:1px;background:#a0a0a0"></div><svg style="left:28px;top:187px" width="16" height="16"><rect x="0.5" y="0.5" width="14" height="14" fill="#fff" stroke="#9a9a9a"/><rect x="2" y="2" width="11" height="11" fill="#e8e9ee"/><path d="M3.5 7.5 L6.5 11.5 L12 3" stroke="#3a4f9a" stroke-width="2" fill="none"/></svg><div class="t" style="left:75px;top:190px;font-size:13px;color:#111">Коммерческие данные - Фидер - ...</div><div style="left:290px;top:185px;width:43px;height:20px;background:linear-gradient(#f6f6f6 0%,#ececec 45%,#dcdcdc 50%,#d4d4d4 100%);border:1px solid #707070;border-radius:3px"></div><div class="t" style="left:290px;width:43px;text-align:center;top:190px;font-size:13px;color:#111">?</div><div style="left:0;top:208px;width:336px;height:1px;background:#a0a0a0"></div><svg style="left:28px;top:213px" width="16" height="16"><rect x="0.5" y="0.5" width="14" height="14" fill="#fff" stroke="#9a9a9a"/><rect x="2" y="2" width="11" height="11" fill="#e8e9ee"/><path d="M3.5 7.5 L6.5 11.5 L12 3" stroke="#3a4f9a" stroke-width="2" fill="none"/></svg><div class="t" style="left:75px;top:216px;font-size:13px;color:#111">Коммерческие данные - Фидер - ...</div><div style="left:290px;top:211px;width:43px;height:20px;background:linear-gradient(#f6f6f6 0%,#ececec 45%,#dcdcdc 50%,#d4d4d4 100%);border:1px solid #707070;border-radius:3px"></div><div class="t" style="left:290px;width:43px;text-align:center;top:216px;font-size:13px;color:#111">?</div><div style="left:0;top:234px;width:336px;height:1px;background:#a0a0a0"></div><svg style="left:28px;top:239px" width="16" height="16"><rect x="0.5" y="0.5" width="14" height="14" fill="#fff" stroke="#9a9a9a"/><rect x="2" y="2" width="11" height="11" fill="#e8e9ee"/><path d="M3.5 7.5 L6.5 11.5 L12 3" stroke="#3a4f9a" stroke-width="2" fill="none"/></svg><div class="t" style="left:75px;top:242px;font-size:13px;color:#111">Коммерческие данные - Фидер - ...</div><div style="left:290px;top:237px;width:43px;height:20px;background:linear-gradient(#f6f6f6 0%,#ececec 45%,#dcdcdc 50%,#d4d4d4 100%);border:1px solid #707070;border-radius:3px"></div><div class="t" style="left:290px;width:43px;text-align:center;top:242px;font-size:13px;color:#111">?</div><div style="left:0;top:260px;width:336px;height:1px;background:#a0a0a0"></div><svg style="left:28px;top:265px" width="16" height="16"><rect x="0.5" y="0.5" width="14" height="14" fill="#fff" stroke="#9a9a9a"/><rect x="2" y="2" width="11" height="11" fill="#e8e9ee"/><path d="M3.5 7.5 L6.5 11.5 L12 3" stroke="#3a4f9a" stroke-width="2" fill="none"/></svg><div class="t" style="left:75px;top:268px;font-size:13px;color:#111">Коммерческие данные - Фидер - ...</div><div style="left:290px;top:263px;width:43px;height:20px;background:linear-gradient(#f6f6f6 0%,#ececec 45%,#dcdcdc 50%,#d4d4d4 100%);border:1px solid #707070;border-radius:3px"></div><div class="t" style="left:290px;width:43px;text-align:center;top:268px;font-size:13px;color:#111">?</div><div style="left:0;top:286px;width:336px;height:1px;background:#a0a0a0"></div><svg style="left:28px;top:291px" width="16" height="16"><rect x="0.5" y="0.5" width="14" height="14" fill="#fff" stroke="#9a9a9a"/><rect x="2" y="2" width="11" height="11" fill="#e8e9ee"/><path d="M3.5 7.5 L6.5 11.5 L12 3" stroke="#3a4f9a" stroke-width="2" fill="none"/></svg><div class="t" style="left:75px;top:294px;font-size:13px;color:#111">Максимумы по группе 1-го уров...</div><div style="left:290px;top:289px;width:43px;height:20px;background:linear-gradient(#f6f6f6 0%,#ececec 45%,#dcdcdc 50%,#d4d4d4 100%);border:1px solid #707070;border-radius:3px"></div><div class="t" style="left:290px;width:43px;text-align:center;top:294px;font-size:13px;color:#111">?</div><div style="left:0;top:312px;width:336px;height:1px;background:#a0a0a0"></div><svg style="left:28px;top:317px" width="16" height="16"><rect x="0.5" y="0.5" width="14" height="14" fill="#fff" stroke="#9a9a9a"/><rect x="2" y="2" width="11" height="11" fill="#e8e9ee"/><path d="M3.5 7.5 L6.5 11.5 L12 3" stroke="#3a4f9a" stroke-width="2" fill="none"/></svg><div class="t" style="left:75px;top:320px;font-size:13px;color:#111">Перерасчет всех формул отчета</div><div style="left:290px;top:315px;width:43px;height:20px;background:linear-gradient(#f6f6f6 0%,#ececec 45%,#dcdcdc 50%,#d4d4d4 100%);border:1px solid #707070;border-radius:3px"></div><div class="t" style="left:290px;width:43px;text-align:center;top:320px;font-size:13px;color:#111">?</div><div style="left:0;top:338px;width:336px;height:1px;background:#a0a0a0"></div><div style="left:72px;top:0;width:1px;height:338px;background:#a0a0a0"></div><div style="left:287px;top:0;width:1px;height:338px;background:#a0a0a0"></div></div>
<div style="left:4px;top:757px;width:14px;height:1px;background:#a0a0a0"></div>
<div style="left:4px;top:783px;width:14px;height:1px;background:#a0a0a0"></div>
<div style="left:4px;top:809px;width:14px;height:1px;background:#a0a0a0"></div>
<div style="left:4px;top:835px;width:14px;height:1px;background:#a0a0a0"></div>
<div style="left:4px;top:861px;width:14px;height:1px;background:#a0a0a0"></div>
<div style="left:4px;top:887px;width:14px;height:1px;background:#a0a0a0"></div>
<div style="left:4px;top:913px;width:14px;height:1px;background:#a0a0a0"></div>
<div style="left:4px;top:939px;width:14px;height:1px;background:#a0a0a0"></div>
<div style="left:4px;top:965px;width:14px;height:1px;background:#a0a0a0"></div>
<div style="left:4px;top:991px;width:14px;height:1px;background:#a0a0a0"></div>
<div style="left:4px;top:1017px;width:14px;height:1px;background:#a0a0a0"></div>
<div style="left:4px;top:1043px;width:14px;height:1px;background:#a0a0a0"></div>
<div style="left:4px;top:1069px;width:14px;height:1px;background:#a0a0a0"></div>
<div style="left:371px;top:281px;width:21px;height:809px;background:linear-gradient(90deg,#e8e8e8,#f4f4f4 50%,#e8e8e8)"></div>
<svg style="left:377px;top:288px;" width="10" height="6" viewBox="0 0 10 6"><path d="M0 6 L5 0 L10 6Z" fill="#333"/></svg>
<div style="left:372px;top:304px;width:20px;height:106px;background:linear-gradient(90deg,#f2f2f2 0%,#e6e6e6 30%,#d4d4d6 60%,#c8c8cc 100%);border:1px solid #b0b0b0;border-radius:2px"></div>
<svg style="left:376px;top:351px;" width="11" height="9" viewBox="0 0 11 9"><rect x="0" y="0" width="11" height="1" fill="#666"/><rect x="0" y="3" width="11" height="1" fill="#666"/><rect x="0" y="6" width="11" height="1" fill="#666"/></svg>
<svg style="left:377px;top:1074px;" width="10" height="6" viewBox="0 0 10 6"><path d="M0 0 H10 L5 6Z" fill="#555"/></svg>
<div style="left:4px;top:1089px;width:388px;height:1px;background:#a0a0a0"></div>
<div style="left:18px;top:375px;width:1px;height:715px;background:#a0a0a0"></div>
<div style="left:4px;top:1090px;width:388px;height:30px;background:#f0f0f0"></div>
<div style="left:3px;top:1092px;width:102px;height:2px;background:#7a7a7a"></div>
<div style="left:5px;top:1094px;width:100px;height:23px;background:linear-gradient(#e6e6e6 0%,#dcdcdc 50%,#ececec 100%);border:1px solid #a8a8a8;border-top:none"></div>
<div class="t" style="left:12px;top:1100px;font-size:13px;color:#111">Буфер обмена</div>
<div style="left:105px;top:1093px;width:287px;height:26px;background:#f0f0f0"></div>
<div style="left:222px;top:1092px;width:171px;height:2px;background:#7a7a7a"></div>
<div style="left:105px;top:1093px;width:117px;height:26px;background:#fff;border:1px solid #a8a8a8;border-top:none"></div>
<div class="t" style="left:114px;top:1102px;font-size:13px;color:#111">Палитра команд</div>
<div style="left:394px;top:250px;width:1058px;height:871px;background:#f0f0f0"></div>
<div style="left:395px;top:274px;width:1056px;height:846px;border:1px solid #8a8a8a;border-top:none;border-radius:0 0 3px 3px;background:#f0f0f0"></div>
<div style="left:583px;top:274px;width:824px;height:1px;background:#8a8a8a"></div>
<div style="left:396px;top:249px;width:188px;height:26px;background:#fff;border:1px solid #8a8a8a;border-bottom:none;border-radius:2px 2px 0 0"></div>
<svg style="left:404px;top:253px;" width="16" height="16" viewBox="0 0 16 16"><g transform="scale(0.8)"><path d="M0.5 1 H16 L15.5 9 L13.5 14 V19 H4 V14 L1.5 9Z" fill="#6a6a6a" stroke="#3a3a3a" stroke-width="0.8"/><circle cx="8.5" cy="8.5" r="5.8" fill="#a8a8a8" stroke="#555" stroke-width="0.6"/><path d="M4 5 L13 12 M13 5 L4 12 M8.5 3 V14 M3 8.5 H14" stroke="#e8e8e8" stroke-width="1" stroke-dasharray="1.2 1"/><circle cx="8.5" cy="8.5" r="2" fill="#d0d0d0"/><rect x="4.5" y="15" width="8.5" height="3.5" fill="#8a8a8a"/><path d="M5 16 H12 M5 17.5 H12" stroke="#c8c8c8" stroke-width="0.6" stroke-dasharray="1 1"/><path d="M16 1.5 H19" stroke="#d06a1a" stroke-width="1.4"/><path d="M1 1.2 H16" stroke="#d8d8d8" stroke-width="1"/></g></svg>
<div class="t" style="left:424px;top:256px;font-size:13px;color:#111">Редактор - Без имени</div>
<div style="left:565px;top:254px;width:14px;height:14px;background:linear-gradient(#f0c8c0,#d88a7a);border:1px solid #7a3a30;border-radius:1px"></div>
<svg style="left:568px;top:257px;" width="8" height="8" viewBox="0 0 8 8"><path d="M1.5 1.5 L6.5 6.5 M6.5 1.5 L1.5 6.5" stroke="#fff" stroke-width="1.6"/></svg>
<div style="left:1407px;top:251px;width:19px;height:23px;background:linear-gradient(#f8f8f8,#e4e4e4);border:1px solid #8a8a8a;border-radius:2px"></div>
<svg style="left:1412px;top:260px;" width="10" height="6" viewBox="0 0 10 6"><path d="M0 0 H10 L5 6Z" fill="#000"/></svg>
<div style="left:1430px;top:251px;width:19px;height:23px;background:linear-gradient(#e69a8a 0%,#cf5a44 45%,#b8402c 100%);border:1px solid #6a2a20;border-radius:2px"></div>
<svg style="left:1435px;top:259px;" width="8" height="7" viewBox="0 0 8 7"><path d="M1 1 L7 6 M7 1 L1 6" stroke="#fff" stroke-width="2"/></svg>
<div style="left:399px;top:281px;width:1028px;height:813px;background:#fff;overflow:hidden"></div>
<div style="left:399px;top:275px;width:1028px;height:3px;background:#ffffff"></div>
<div style="left:399px;top:278px;width:1028px;height:3px;background:#f0f0f0"></div>
<div style="left:399px;top:281px;width:1028px;height:24px;background:linear-gradient(#ffffff 0%,#ffffff 40%,#f4f5f7 41%,#eff0f3 100%);border-bottom:1px solid #d8d8dc"></div>
<div style="left:427px;top:282px;width:1px;height:22px;background:#e6e7ea"></div>
<div class="t" style="left:169px;width:600px;text-align:center;top:288px;font-size:13.5px;color:#111">A</div>
<div style="left:512px;top:282px;width:1px;height:22px;background:#e6e7ea"></div>
<div class="t" style="left:254px;width:600px;text-align:center;top:288px;font-size:13.5px;color:#111">B</div>
<div style="left:597px;top:282px;width:1px;height:22px;background:#e6e7ea"></div>
<div class="t" style="left:339px;width:600px;text-align:center;top:288px;font-size:13.5px;color:#111">C</div>
<div style="left:682px;top:282px;width:1px;height:22px;background:#e6e7ea"></div>
<div class="t" style="left:424px;width:600px;text-align:center;top:288px;font-size:13.5px;color:#111">D</div>
<div style="left:767px;top:282px;width:1px;height:22px;background:#e6e7ea"></div>
<div class="t" style="left:509px;width:600px;text-align:center;top:288px;font-size:13.5px;color:#111">E</div>
<div style="left:852px;top:281px;width:86px;height:24px;background:linear-gradient(#e2f5fc 0%,#e2f5fc 40%,#bde8f9 41%,#b4e2f6 100%);border:1px solid #7ec0e8;border-top:none"></div>
<div class="t" style="left:594px;width:600px;text-align:center;top:288px;font-size:13.5px;color:#111">F</div>
<div class="t" style="left:679px;width:600px;text-align:center;top:288px;font-size:13.5px;color:#111">G</div>
<div style="left:1022px;top:282px;width:1px;height:22px;background:#e6e7ea"></div>
<div class="t" style="left:764px;width:600px;text-align:center;top:288px;font-size:13.5px;color:#111">H</div>
<div style="left:1107px;top:282px;width:1px;height:22px;background:#e6e7ea"></div>
<div class="t" style="left:849px;width:600px;text-align:center;top:288px;font-size:13.5px;color:#111">I</div>
<div style="left:1192px;top:282px;width:1px;height:22px;background:#e6e7ea"></div>
<div class="t" style="left:934px;width:600px;text-align:center;top:288px;font-size:13.5px;color:#111">J</div>
<div style="left:1277px;top:282px;width:1px;height:22px;background:#e6e7ea"></div>
<div class="t" style="left:1019px;width:600px;text-align:center;top:288px;font-size:13.5px;color:#111">K</div>
<div style="left:1362px;top:282px;width:1px;height:22px;background:#e6e7ea"></div>
<div class="t" style="left:1104px;width:600px;text-align:center;top:288px;font-size:13.5px;color:#111">L</div>
<div style="left:399px;top:281px;width:1px;height:24px;background:#fff"></div>
<div style="left:399px;top:305px;width:28px;height:20px;background:linear-gradient(#ffffff 0%,#ffffff 40%,#f2f3f6 41%,#f0f1f4 100%);border-bottom:1px solid #d8d8dc"></div>
<div class="t" style="left:113px;width:600px;text-align:center;top:310px;font-size:13px;color:#111">1</div>
<div style="left:399px;top:325px;width:28px;height:20px;background:linear-gradient(#ffffff 0%,#ffffff 40%,#f2f3f6 41%,#f0f1f4 100%);border-bottom:1px solid #d8d8dc"></div>
<div class="t" style="left:113px;width:600px;text-align:center;top:330px;font-size:13px;color:#111">2</div>
<div style="left:399px;top:345px;width:28px;height:20px;background:linear-gradient(#ffffff 0%,#ffffff 40%,#f2f3f6 41%,#f0f1f4 100%);border-bottom:1px solid #d8d8dc"></div>
<div class="t" style="left:113px;width:600px;text-align:center;top:350px;font-size:13px;color:#111">3</div>
<div style="left:399px;top:365px;width:28px;height:20px;background:linear-gradient(#ffffff 0%,#ffffff 40%,#f2f3f6 41%,#f0f1f4 100%);border-bottom:1px solid #d8d8dc"></div>
<div class="t" style="left:113px;width:600px;text-align:center;top:370px;font-size:13px;color:#111">4</div>
<div style="left:399px;top:385px;width:28px;height:20px;background:linear-gradient(#ffffff 0%,#ffffff 40%,#f2f3f6 41%,#f0f1f4 100%);border-bottom:1px solid #d8d8dc"></div>
<div class="t" style="left:113px;width:600px;text-align:center;top:390px;font-size:13px;color:#111">5</div>
<div style="left:399px;top:405px;width:28px;height:20px;background:linear-gradient(#ffffff 0%,#ffffff 40%,#f2f3f6 41%,#f0f1f4 100%);border-bottom:1px solid #d8d8dc"></div>
<div class="t" style="left:113px;width:600px;text-align:center;top:410px;font-size:13px;color:#111">6</div>
<div style="left:399px;top:425px;width:28px;height:20px;background:linear-gradient(#ffffff 0%,#ffffff 40%,#f2f3f6 41%,#f0f1f4 100%);border-bottom:1px solid #d8d8dc"></div>
<div class="t" style="left:113px;width:600px;text-align:center;top:430px;font-size:13px;color:#111">7</div>
<div style="left:399px;top:445px;width:28px;height:20px;background:linear-gradient(#ffffff 0%,#ffffff 40%,#f2f3f6 41%,#f0f1f4 100%);border-bottom:1px solid #d8d8dc"></div>
<div class="t" style="left:113px;width:600px;text-align:center;top:450px;font-size:13px;color:#111">8</div>
<div style="left:399px;top:465px;width:28px;height:20px;background:linear-gradient(#ffffff 0%,#ffffff 40%,#f2f3f6 41%,#f0f1f4 100%);border-bottom:1px solid #d8d8dc"></div>
<div class="t" style="left:113px;width:600px;text-align:center;top:470px;font-size:13px;color:#111">9</div>
<div style="left:399px;top:485px;width:28px;height:24px;background:linear-gradient(#ffffff 0%,#ffffff 40%,#f2f3f6 41%,#f0f1f4 100%);border-bottom:1px solid #d8d8dc"></div>
<div class="t" style="left:113px;width:600px;text-align:center;top:492px;font-size:13px;color:#111">10</div>
<div style="left:399px;top:509px;width:28px;height:24px;background:linear-gradient(#ffffff 0%,#ffffff 40%,#f2f3f6 41%,#f0f1f4 100%);border-bottom:1px solid #d8d8dc"></div>
<div class="t" style="left:113px;width:600px;text-align:center;top:516px;font-size:13px;color:#111">11</div>
<div style="left:399px;top:533px;width:28px;height:24px;background:linear-gradient(#ffffff 0%,#ffffff 40%,#f2f3f6 41%,#f0f1f4 100%);border-bottom:1px solid #d8d8dc"></div>
<div class="t" style="left:113px;width:600px;text-align:center;top:540px;font-size:13px;color:#111">12</div>
<div style="left:399px;top:557px;width:28px;height:24px;background:linear-gradient(#ffffff 0%,#ffffff 40%,#f2f3f6 41%,#f0f1f4 100%);border-bottom:1px solid #d8d8dc"></div>
<div class="t" style="left:113px;width:600px;text-align:center;top:564px;font-size:13px;color:#111">13</div>
<div style="left:399px;top:581px;width:28px;height:24px;background:linear-gradient(#ffffff 0%,#ffffff 40%,#f2f3f6 41%,#f0f1f4 100%);border-bottom:1px solid #d8d8dc"></div>
<div class="t" style="left:113px;width:600px;text-align:center;top:588px;font-size:13px;color:#111">14</div>
<div style="left:399px;top:605px;width:28px;height:24px;background:linear-gradient(#ffffff 0%,#ffffff 40%,#f2f3f6 41%,#f0f1f4 100%);border-bottom:1px solid #d8d8dc"></div>
<div class="t" style="left:113px;width:600px;text-align:center;top:612px;font-size:13px;color:#111">15</div>
<div style="left:399px;top:630px;width:29px;height:23px;background:linear-gradient(#e6f5fd 0%,#e6f5fd 40%,#bfe6f8 41%,#b4e0f6 100%);border:1px solid #86c4ea"></div>
<div class="t" style="left:113px;width:600px;text-align:center;top:636px;font-size:13px;color:#111">16</div>
<div style="left:399px;top:653px;width:28px;height:24px;background:linear-gradient(#ffffff 0%,#ffffff 40%,#f2f3f6 41%,#f0f1f4 100%);border-bottom:1px solid #d8d8dc"></div>
<div class="t" style="left:113px;width:600px;text-align:center;top:660px;font-size:13px;color:#111">17</div>
<div style="left:399px;top:677px;width:28px;height:20px;background:linear-gradient(#ffffff 0%,#ffffff 40%,#f2f3f6 41%,#f0f1f4 100%);border-bottom:1px solid #d8d8dc"></div>
<div class="t" style="left:113px;width:600px;text-align:center;top:682px;font-size:13px;color:#111">18</div>
<div style="left:399px;top:697px;width:28px;height:20px;background:linear-gradient(#ffffff 0%,#ffffff 40%,#f2f3f6 41%,#f0f1f4 100%);border-bottom:1px solid #d8d8dc"></div>
<div class="t" style="left:113px;width:600px;text-align:center;top:702px;font-size:13px;color:#111">19</div>
<div style="left:399px;top:717px;width:28px;height:20px;background:linear-gradient(#ffffff 0%,#ffffff 40%,#f2f3f6 41%,#f0f1f4 100%);border-bottom:1px solid #d8d8dc"></div>
<div class="t" style="left:113px;width:600px;text-align:center;top:722px;font-size:13px;color:#111">20</div>
<div style="left:399px;top:737px;width:28px;height:20px;background:linear-gradient(#ffffff 0%,#ffffff 40%,#f2f3f6 41%,#f0f1f4 100%);border-bottom:1px solid #d8d8dc"></div>
<div class="t" style="left:113px;width:600px;text-align:center;top:742px;font-size:13px;color:#111">21</div>
<div style="left:399px;top:757px;width:28px;height:20px;background:linear-gradient(#ffffff 0%,#ffffff 40%,#f2f3f6 41%,#f0f1f4 100%);border-bottom:1px solid #d8d8dc"></div>
<div class="t" style="left:113px;width:600px;text-align:center;top:762px;font-size:13px;color:#111">22</div>
<div style="left:399px;top:777px;width:28px;height:20px;background:linear-gradient(#ffffff 0%,#ffffff 40%,#f2f3f6 41%,#f0f1f4 100%);border-bottom:1px solid #d8d8dc"></div>
<div class="t" style="left:113px;width:600px;text-align:center;top:782px;font-size:13px;color:#111">23</div>
<div style="left:399px;top:797px;width:28px;height:20px;background:linear-gradient(#ffffff 0%,#ffffff 40%,#f2f3f6 41%,#f0f1f4 100%);border-bottom:1px solid #d8d8dc"></div>
<div class="t" style="left:113px;width:600px;text-align:center;top:802px;font-size:13px;color:#111">24</div>
<div style="left:399px;top:817px;width:28px;height:20px;background:linear-gradient(#ffffff 0%,#ffffff 40%,#f2f3f6 41%,#f0f1f4 100%);border-bottom:1px solid #d8d8dc"></div>
<div class="t" style="left:113px;width:600px;text-align:center;top:822px;font-size:13px;color:#111">25</div>
<div style="left:399px;top:837px;width:28px;height:20px;background:linear-gradient(#ffffff 0%,#ffffff 40%,#f2f3f6 41%,#f0f1f4 100%);border-bottom:1px solid #d8d8dc"></div>
<div class="t" style="left:113px;width:600px;text-align:center;top:842px;font-size:13px;color:#111">26</div>
<div style="left:399px;top:857px;width:28px;height:20px;background:linear-gradient(#ffffff 0%,#ffffff 40%,#f2f3f6 41%,#f0f1f4 100%);border-bottom:1px solid #d8d8dc"></div>
<div class="t" style="left:113px;width:600px;text-align:center;top:862px;font-size:13px;color:#111">27</div>
<div style="left:399px;top:877px;width:28px;height:20px;background:linear-gradient(#ffffff 0%,#ffffff 40%,#f2f3f6 41%,#f0f1f4 100%);border-bottom:1px solid #d8d8dc"></div>
<div class="t" style="left:113px;width:600px;text-align:center;top:882px;font-size:13px;color:#111">28</div>
<div style="left:399px;top:897px;width:28px;height:20px;background:linear-gradient(#ffffff 0%,#ffffff 40%,#f2f3f6 41%,#f0f1f4 100%);border-bottom:1px solid #d8d8dc"></div>
<div class="t" style="left:113px;width:600px;text-align:center;top:902px;font-size:13px;color:#111">29</div>
<div style="left:399px;top:917px;width:28px;height:20px;background:linear-gradient(#ffffff 0%,#ffffff 40%,#f2f3f6 41%,#f0f1f4 100%);border-bottom:1px solid #d8d8dc"></div>
<div class="t" style="left:113px;width:600px;text-align:center;top:922px;font-size:13px;color:#111">30</div>
<div style="left:399px;top:937px;width:28px;height:20px;background:linear-gradient(#ffffff 0%,#ffffff 40%,#f2f3f6 41%,#f0f1f4 100%);border-bottom:1px solid #d8d8dc"></div>
<div class="t" style="left:113px;width:600px;text-align:center;top:942px;font-size:13px;color:#111">31</div>
<div style="left:399px;top:957px;width:28px;height:20px;background:linear-gradient(#ffffff 0%,#ffffff 40%,#f2f3f6 41%,#f0f1f4 100%);border-bottom:1px solid #d8d8dc"></div>
<div class="t" style="left:113px;width:600px;text-align:center;top:962px;font-size:13px;color:#111">32</div>
<div style="left:399px;top:977px;width:28px;height:20px;background:linear-gradient(#ffffff 0%,#ffffff 40%,#f2f3f6 41%,#f0f1f4 100%);border-bottom:1px solid #d8d8dc"></div>
<div class="t" style="left:113px;width:600px;text-align:center;top:982px;font-size:13px;color:#111">33</div>
<div style="left:399px;top:997px;width:28px;height:20px;background:linear-gradient(#ffffff 0%,#ffffff 40%,#f2f3f6 41%,#f0f1f4 100%);border-bottom:1px solid #d8d8dc"></div>
<div class="t" style="left:113px;width:600px;text-align:center;top:1002px;font-size:13px;color:#111">34</div>
<div style="left:399px;top:1017px;width:28px;height:20px;background:linear-gradient(#ffffff 0%,#ffffff 40%,#f2f3f6 41%,#f0f1f4 100%);border-bottom:1px solid #d8d8dc"></div>
<div class="t" style="left:113px;width:600px;text-align:center;top:1022px;font-size:13px;color:#111">35</div>
<div style="left:399px;top:1037px;width:28px;height:20px;background:linear-gradient(#ffffff 0%,#ffffff 40%,#f2f3f6 41%,#f0f1f4 100%);border-bottom:1px solid #d8d8dc"></div>
<div class="t" style="left:113px;width:600px;text-align:center;top:1042px;font-size:13px;color:#111">36</div>
<div style="left:399px;top:1057px;width:28px;height:20px;background:linear-gradient(#ffffff 0%,#ffffff 40%,#f2f3f6 41%,#f0f1f4 100%);border-bottom:1px solid #d8d8dc"></div>
<div class="t" style="left:113px;width:600px;text-align:center;top:1062px;font-size:13px;color:#111">37</div>
<div style="left:399px;top:1077px;width:28px;height:20px;background:linear-gradient(#ffffff 0%,#ffffff 40%,#f2f3f6 41%,#f0f1f4 100%);border-bottom:1px solid #d8d8dc"></div>
<div class="t" style="left:113px;width:600px;text-align:center;top:1082px;font-size:13px;color:#111">38</div>
<svg style="left:427px;top:281px" width="1000" height="813"><rect x="0" y="44" width="1000" height="1" fill="#a4a4a4"/><rect x="0" y="64" width="1000" height="1" fill="#a4a4a4"/><rect x="0" y="84" width="1000" height="1" fill="#a4a4a4"/><rect x="0" y="104" width="1000" height="1" fill="#a4a4a4"/><rect x="0" y="124" width="1000" height="1" fill="#a4a4a4"/><rect x="0" y="144" width="1000" height="1" fill="#a4a4a4"/><rect x="0" y="164" width="1000" height="1" fill="#a4a4a4"/><rect x="0" y="184" width="1000" height="1" fill="#a4a4a4"/><rect x="0" y="204" width="1000" height="1" fill="#a4a4a4"/><rect x="0" y="228" width="1000" height="1" fill="#a4a4a4"/><rect x="0" y="252" width="1000" height="1" fill="#a4a4a4"/><rect x="0" y="276" width="1000" height="1" fill="#a4a4a4"/><rect x="0" y="300" width="1000" height="1" fill="#a4a4a4"/><rect x="0" y="324" width="1000" height="1" fill="#a4a4a4"/><rect x="0" y="348" width="1000" height="1" fill="#a4a4a4"/><rect x="0" y="372" width="1000" height="1" fill="#a4a4a4"/><rect x="0" y="396" width="1000" height="1" fill="#a4a4a4"/><rect x="0" y="416" width="1000" height="1" fill="#a4a4a4"/><rect x="0" y="436" width="1000" height="1" fill="#a4a4a4"/><rect x="0" y="456" width="1000" height="1" fill="#a4a4a4"/><rect x="0" y="476" width="1000" height="1" fill="#a4a4a4"/><rect x="0" y="496" width="1000" height="1" fill="#a4a4a4"/><rect x="0" y="516" width="1000" height="1" fill="#a4a4a4"/><rect x="0" y="536" width="1000" height="1" fill="#a4a4a4"/><rect x="0" y="556" width="1000" height="1" fill="#a4a4a4"/><rect x="0" y="576" width="1000" height="1" fill="#a4a4a4"/><rect x="0" y="596" width="1000" height="1" fill="#a4a4a4"/><rect x="0" y="616" width="1000" height="1" fill="#a4a4a4"/><rect x="0" y="636" width="1000" height="1" fill="#a4a4a4"/><rect x="0" y="656" width="1000" height="1" fill="#a4a4a4"/><rect x="0" y="676" width="1000" height="1" fill="#a4a4a4"/><rect x="0" y="696" width="1000" height="1" fill="#a4a4a4"/><rect x="0" y="716" width="1000" height="1" fill="#a4a4a4"/><rect x="0" y="736" width="1000" height="1" fill="#a4a4a4"/><rect x="0" y="756" width="1000" height="1" fill="#a4a4a4"/><rect x="0" y="776" width="1000" height="1" fill="#a4a4a4"/><rect x="0" y="796" width="1000" height="1" fill="#a4a4a4"/><rect x="85" y="24" width="1" height="789" fill="#a4a4a4"/><rect x="170" y="24" width="1" height="789" fill="#a4a4a4"/><rect x="255" y="24" width="1" height="789" fill="#a4a4a4"/><rect x="340" y="24" width="1" height="789" fill="#a4a4a4"/><rect x="425" y="24" width="1" height="789" fill="#a4a4a4"/><rect x="510" y="24" width="1" height="789" fill="#a4a4a4"/><rect x="595" y="24" width="1" height="789" fill="#a4a4a4"/><rect x="680" y="24" width="1" height="789" fill="#a4a4a4"/><rect x="765" y="24" width="1" height="789" fill="#a4a4a4"/><rect x="850" y="24" width="1" height="789" fill="#a4a4a4"/><rect x="935" y="24" width="1" height="789" fill="#a4a4a4"/><rect x="1020" y="24" width="1" height="789" fill="#a4a4a4"/></svg>
<div class="t" style="left:79px;width:600px;text-align:right;top:490px;font-size:15.6px;color:#000">5</div>
<div style="left:683px;top:485px;width:84px;height:24px;overflow:hidden"><div class="t" style="left:2px;top:5px;letter-spacing:0.5px;font-size:15.6px;color:#000">Потребители</div></div>
<div class="t" style="left:249px;width:600px;text-align:right;top:490px;font-size:15.6px;color:#000">45465</div>
<div style="left:853px;top:485px;width:84px;height:24px;overflow:hidden"><div class="t" style="left:2px;top:5px;font-size:15.6px;color:#000">ЗАО НПП Вектор</div></div>
<div class="t" style="left:419px;width:600px;text-align:right;top:490px;font-size:15.6px;color:#000">1</div>
<div style="left:1023px;top:485px;width:84px;height:24px;overflow:hidden"><div class="t" style="left:2px;top:5px;letter-spacing:0.5px;font-size:15.6px;color:#000">РП-1765 яч.4</div></div>
<div class="t" style="left:589px;width:600px;text-align:right;top:490px;font-size:15.6px;color:#000">1132263</div>
<div style="left:1193px;top:485px;width:84px;height:24px;overflow:hidden"><div class="t" style="left:2px;top:5px;font-size:15.6px;color:#000">Активный</div></div>
<div style="left:1278px;top:485px;width:84px;height:24px;overflow:hidden"><div class="t" style="right:3px;top:5px;letter-spacing:0.5px;font-size:15.6px;color:#000">01.12.2015</div></div>
<div style="left:1363px;top:485px;width:62px;height:24px;overflow:hidden"><div class="t" style="left:21px;top:5px;font-size:15.6px;color:#000">8 004,37</div></div>
<div class="t" style="left:79px;width:600px;text-align:right;top:514px;font-size:15.6px;color:#000">5</div>
<div style="left:683px;top:509px;width:84px;height:24px;overflow:hidden"><div class="t" style="left:2px;top:5px;letter-spacing:0.5px;font-size:15.6px;color:#000">Потребители</div></div>
<div class="t" style="left:249px;width:600px;text-align:right;top:514px;font-size:15.6px;color:#000">45465</div>
<div style="left:853px;top:509px;width:84px;height:24px;overflow:hidden"><div class="t" style="left:2px;top:5px;font-size:15.6px;color:#000">ЗАО НПП Вектор</div></div>
<div class="t" style="left:419px;width:600px;text-align:right;top:514px;font-size:15.6px;color:#000">1</div>
<div style="left:1023px;top:509px;width:84px;height:24px;overflow:hidden"><div class="t" style="left:2px;top:5px;letter-spacing:0.5px;font-size:15.6px;color:#000">РП-1765 яч.4</div></div>
<div class="t" style="left:589px;width:600px;text-align:right;top:514px;font-size:15.6px;color:#000">1132263</div>
<div style="left:1193px;top:509px;width:84px;height:24px;overflow:hidden"><div class="t" style="left:2px;top:5px;font-size:15.6px;color:#000">Активный</div></div>
<div style="left:1278px;top:509px;width:84px;height:24px;overflow:hidden"><div class="t" style="right:3px;top:5px;letter-spacing:0.5px;font-size:15.6px;color:#000">01.12.2015</div></div>
<div style="left:1363px;top:509px;width:62px;height:24px;overflow:hidden"><div class="t" style="left:21px;top:5px;font-size:15.6px;color:#000">8 004,37</div></div>
<div class="t" style="left:79px;width:600px;text-align:right;top:538px;font-size:15.6px;color:#000">5</div>
<div style="left:683px;top:533px;width:84px;height:24px;overflow:hidden"><div class="t" style="left:2px;top:5px;letter-spacing:0.5px;font-size:15.6px;color:#000">Потребители</div></div>
<div class="t" style="left:249px;width:600px;text-align:right;top:538px;font-size:15.6px;color:#000">45465</div>
<div style="left:853px;top:533px;width:84px;height:24px;overflow:hidden"><div class="t" style="left:2px;top:5px;font-size:15.6px;color:#000">ЗАО НПП Вектор</div></div>
<div class="t" style="left:419px;width:600px;text-align:right;top:538px;font-size:15.6px;color:#000">1</div>
<div style="left:1023px;top:533px;width:84px;height:24px;overflow:hidden"><div class="t" style="left:2px;top:5px;letter-spacing:0.5px;font-size:15.6px;color:#000">РП-1765 яч.4</div></div>
<div class="t" style="left:589px;width:600px;text-align:right;top:538px;font-size:15.6px;color:#000">1132263</div>
<div style="left:1193px;top:533px;width:84px;height:24px;overflow:hidden"><div class="t" style="left:2px;top:5px;font-size:15.6px;color:#000">Активный</div></div>
<div style="left:1278px;top:533px;width:84px;height:24px;overflow:hidden"><div class="t" style="right:3px;top:5px;letter-spacing:0.5px;font-size:15.6px;color:#000">01.12.2015</div></div>
<div style="left:1363px;top:533px;width:62px;height:24px;overflow:hidden"><div class="t" style="left:2px;top:5px;font-size:15.6px;color:#000">29.11.1999</div></div>
<div class="t" style="left:79px;width:600px;text-align:right;top:562px;font-size:15.6px;color:#000">5</div>
<div style="left:683px;top:557px;width:84px;height:24px;overflow:hidden"><div class="t" style="left:2px;top:5px;letter-spacing:0.5px;font-size:15.6px;color:#000">Потребители</div></div>
<div class="t" style="left:249px;width:600px;text-align:right;top:562px;font-size:15.6px;color:#000">45465</div>
<div style="left:853px;top:557px;width:84px;height:24px;overflow:hidden"><div class="t" style="left:2px;top:5px;font-size:15.6px;color:#000">ЗАО НПП Вектор</div></div>
<div class="t" style="left:419px;width:600px;text-align:right;top:562px;font-size:15.6px;color:#000">1</div>
<div style="left:1023px;top:557px;width:84px;height:24px;overflow:hidden"><div class="t" style="left:2px;top:5px;letter-spacing:0.5px;font-size:15.6px;color:#000">РП-1765 яч.4</div></div>
<div class="t" style="left:589px;width:600px;text-align:right;top:562px;font-size:15.6px;color:#000">1132263</div>
<div style="left:1193px;top:557px;width:84px;height:24px;overflow:hidden"><div class="t" style="left:2px;top:5px;font-size:15.6px;color:#000">Активный</div></div>
<div style="left:1278px;top:557px;width:84px;height:24px;overflow:hidden"><div class="t" style="right:3px;top:5px;letter-spacing:0.5px;font-size:15.6px;color:#000">01.12.2015</div></div>
<div style="left:1363px;top:557px;width:62px;height:24px;overflow:hidden"><div class="t" style="left:2px;top:5px;font-size:15.6px;color:#000">29.11.1999</div></div>
<div class="t" style="left:79px;width:600px;text-align:right;top:586px;font-size:15.6px;color:#000">5</div>
<div style="left:683px;top:581px;width:84px;height:24px;overflow:hidden"><div class="t" style="left:2px;top:5px;letter-spacing:0.5px;font-size:15.6px;color:#000">Потребители</div></div>
<div class="t" style="left:249px;width:600px;text-align:right;top:586px;font-size:15.6px;color:#000">45465</div>
<div style="left:853px;top:581px;width:84px;height:24px;overflow:hidden"><div class="t" style="left:2px;top:5px;font-size:15.6px;color:#000">ЗАО НПП Вектор</div></div>
<div class="t" style="left:419px;width:600px;text-align:right;top:586px;font-size:15.6px;color:#000">1</div>
<div style="left:1023px;top:581px;width:84px;height:24px;overflow:hidden"><div class="t" style="left:2px;top:5px;letter-spacing:0.5px;font-size:15.6px;color:#000">РП-1765 яч.4</div></div>
<div class="t" style="left:589px;width:600px;text-align:right;top:586px;font-size:15.6px;color:#000">1132263</div>
<div style="left:1193px;top:581px;width:84px;height:24px;overflow:hidden"><div class="t" style="left:2px;top:5px;font-size:15.6px;color:#000">Активный</div></div>
<div style="left:1278px;top:581px;width:84px;height:24px;overflow:hidden"><div class="t" style="right:3px;top:5px;letter-spacing:0.5px;font-size:15.6px;color:#000">01.12.2015</div></div>
<div style="left:1363px;top:581px;width:62px;height:24px;overflow:hidden"><div class="t" style="left:21px;top:5px;font-size:15.6px;color:#000">8 004,37</div></div>
<div class="t" style="left:79px;width:600px;text-align:right;top:610px;font-size:15.6px;color:#000">5</div>
<div style="left:683px;top:605px;width:84px;height:24px;overflow:hidden"><div class="t" style="left:2px;top:5px;letter-spacing:0.5px;font-size:15.6px;color:#000">Потребители</div></div>
<div class="t" style="left:249px;width:600px;text-align:right;top:610px;font-size:15.6px;color:#000">45465</div>
<div style="left:853px;top:605px;width:84px;height:24px;overflow:hidden"><div class="t" style="left:2px;top:5px;font-size:15.6px;color:#000">ЗАО НПП Вектор</div></div>
<div class="t" style="left:419px;width:600px;text-align:right;top:610px;font-size:15.6px;color:#000">1</div>
<div style="left:1023px;top:605px;width:84px;height:24px;overflow:hidden"><div class="t" style="left:2px;top:5px;letter-spacing:0.5px;font-size:15.6px;color:#000">РП-1765 яч.4</div></div>
<div class="t" style="left:589px;width:600px;text-align:right;top:610px;font-size:15.6px;color:#000">1132263</div>
<div style="left:1193px;top:605px;width:84px;height:24px;overflow:hidden"><div class="t" style="left:2px;top:5px;font-size:15.6px;color:#000">Активный</div></div>
<div style="left:1278px;top:605px;width:84px;height:24px;overflow:hidden"><div class="t" style="right:3px;top:5px;letter-spacing:0.5px;font-size:15.6px;color:#000">01.12.2015</div></div>
<div style="left:1363px;top:605px;width:62px;height:24px;overflow:hidden"><div class="t" style="left:21px;top:5px;font-size:15.6px;color:#000">8 004,37</div></div>
<div class="t" style="left:79px;width:600px;text-align:right;top:634px;font-size:15.6px;color:#000">5</div>
<div style="left:683px;top:629px;width:84px;height:24px;overflow:hidden"><div class="t" style="left:2px;top:5px;letter-spacing:0.5px;font-size:15.6px;color:#000">Потребители</div></div>
<div class="t" style="left:249px;width:600px;text-align:right;top:634px;font-size:15.6px;color:#000">45465</div>
<div style="left:853px;top:629px;width:84px;height:24px;overflow:hidden"><div class="t" style="left:2px;top:5px;font-size:15.6px;color:#000">ЗАО НПП Вектор</div></div>
<div class="t" style="left:419px;width:600px;text-align:right;top:634px;font-size:15.6px;color:#000">1</div>
<div style="left:1023px;top:629px;width:84px;height:24px;overflow:hidden"><div class="t" style="left:2px;top:5px;letter-spacing:0.5px;font-size:15.6px;color:#000">РП-1765 яч.4</div></div>
<div class="t" style="left:589px;width:600px;text-align:right;top:634px;font-size:15.6px;color:#000">1132263</div>
<div style="left:1193px;top:629px;width:84px;height:24px;overflow:hidden"><div class="t" style="left:2px;top:5px;font-size:15.6px;color:#000">Активный</div></div>
<div style="left:1278px;top:629px;width:84px;height:24px;overflow:hidden"><div class="t" style="right:3px;top:5px;letter-spacing:0.5px;font-size:15.6px;color:#000">01.12.2015</div></div>
<div style="left:1363px;top:629px;width:62px;height:24px;overflow:hidden"><div class="t" style="left:21px;top:5px;font-size:15.6px;color:#000">8 004,37</div></div>
<div class="t" style="left:79px;width:600px;text-align:right;top:658px;font-size:15.6px;color:#000">5</div>
<div style="left:683px;top:653px;width:84px;height:24px;overflow:hidden"><div class="t" style="left:2px;top:5px;letter-spacing:0.5px;font-size:15.6px;color:#000">Потребители</div></div>
<div class="t" style="left:249px;width:600px;text-align:right;top:658px;font-size:15.6px;color:#000">45465</div>
<div style="left:853px;top:653px;width:84px;height:24px;overflow:hidden"><div class="t" style="left:2px;top:5px;font-size:15.6px;color:#000">ЗАО НПП Вектор</div></div>
<div class="t" style="left:419px;width:600px;text-align:right;top:658px;font-size:15.6px;color:#000">1</div>
<div style="left:1023px;top:653px;width:84px;height:24px;overflow:hidden"><div class="t" style="left:2px;top:5px;letter-spacing:0.5px;font-size:15.6px;color:#000">РП-1765 яч.4</div></div>
<div class="t" style="left:589px;width:600px;text-align:right;top:658px;font-size:15.6px;color:#000">1132263</div>
<div style="left:1193px;top:653px;width:84px;height:24px;overflow:hidden"><div class="t" style="left:2px;top:5px;font-size:15.6px;color:#000">Активный</div></div>
<div style="left:1278px;top:653px;width:84px;height:24px;overflow:hidden"><div class="t" style="right:3px;top:5px;letter-spacing:0.5px;font-size:15.6px;color:#000">01.12.2015</div></div>
<div style="left:1363px;top:653px;width:62px;height:24px;overflow:hidden"><div class="t" style="left:21px;top:5px;font-size:15.6px;color:#000">8 004,37</div></div>
<svg style="left:597px;top:281px" width="828" height="813"><rect x="0" y="204" width="828" height="1" fill="#fff"/><rect x="0" y="228" width="828" height="1" fill="#fff"/><rect x="0" y="252" width="828" height="1" fill="#fff"/><rect x="0" y="276" width="828" height="1" fill="#fff"/><rect x="0" y="300" width="828" height="1" fill="#fff"/><rect x="0" y="324" width="828" height="1" fill="#fff"/><rect x="0" y="348" width="828" height="1" fill="#fff"/><rect x="0" y="372" width="828" height="1" fill="#fff"/><rect x="0" y="396" width="828" height="1" fill="#fff"/><rect x="0" y="204" width="1" height="192" fill="#fff"/><line x1="0" y1="205" x2="828" y2="205" stroke="#0000ff" stroke-width="2" stroke-dasharray="9 3 3 3" stroke-dashoffset="6"/><line x1="0" y1="227" x2="828" y2="227" stroke="#0000ff" stroke-width="2" stroke-dasharray="9 3 3 3" stroke-dashoffset="6"/><line x1="0" y1="229" x2="828" y2="229" stroke="#0000ff" stroke-width="2" stroke-dasharray="9 3 3 3" stroke-dashoffset="6"/><line x1="0" y1="251" x2="828" y2="251" stroke="#0000ff" stroke-width="2" stroke-dasharray="9 3 3 3" stroke-dashoffset="6"/><line x1="0" y1="253" x2="828" y2="253" stroke="#0000ff" stroke-width="2" stroke-dasharray="9 3 3 3" stroke-dashoffset="6"/><line x1="0" y1="275" x2="828" y2="275" stroke="#0000ff" stroke-width="2" stroke-dasharray="9 3 3 3" stroke-dashoffset="6"/><line x1="0" y1="277" x2="828" y2="277" stroke="#0000ff" stroke-width="2" stroke-dasharray="9 3 3 3" stroke-dashoffset="6"/><line x1="0" y1="299" x2="828" y2="299" stroke="#0000ff" stroke-width="2" stroke-dasharray="9 3 3 3" stroke-dashoffset="6"/><line x1="0" y1="301" x2="828" y2="301" stroke="#0000ff" stroke-width="2" stroke-dasharray="9 3 3 3" stroke-dashoffset="6"/><line x1="0" y1="323" x2="828" y2="323" stroke="#0000ff" stroke-width="2" stroke-dasharray="9 3 3 3" stroke-dashoffset="6"/><line x1="0" y1="325" x2="828" y2="325" stroke="#0000ff" stroke-width="2" stroke-dasharray="9 3 3 3" stroke-dashoffset="6"/><line x1="0" y1="347" x2="828" y2="347" stroke="#0000ff" stroke-width="2" stroke-dasharray="9 3 3 3" stroke-dashoffset="6"/><line x1="0" y1="349" x2="828" y2="349" stroke="#0000ff" stroke-width="2" stroke-dasharray="9 3 3 3" stroke-dashoffset="6"/><line x1="0" y1="371" x2="828" y2="371" stroke="#0000ff" stroke-width="2" stroke-dasharray="9 3 3 3" stroke-dashoffset="6"/><line x1="0" y1="373" x2="828" y2="373" stroke="#0000ff" stroke-width="2" stroke-dasharray="9 3 3 3" stroke-dashoffset="6"/><line x1="0" y1="395" x2="828" y2="395" stroke="#0000ff" stroke-width="2" stroke-dasharray="9 3 3 3" stroke-dashoffset="6"/><line x1="1" y1="204" x2="1" y2="396" stroke="#0000ff" stroke-width="2" stroke-dasharray="9 3 3 3" stroke-dashoffset="9"/></svg>
<div style="left:852px;top:628px;width:86px;height:25px;border:2px solid #3b8fe8"></div>
<div style="left:934px;top:650px;width:6px;height:6px;background:#3b8fe8;border:1px solid #fff"></div>
<div style="left:1427px;top:281px;width:20px;height:813px;background:linear-gradient(90deg,#e6e6e6,#f2f2f2 50%,#e6e6e6)"></div>
<svg style="left:1432px;top:289px;" width="10" height="6" viewBox="0 0 10 6"><path d="M0 6 L5 0 L10 6Z" fill="#333"/></svg>
<div style="left:1428px;top:304px;width:19px;height:748px;background:linear-gradient(90deg,#f4f4f4 0%,#e8e8e8 30%,#d8d8da 60%,#c8c8cc 100%);border:1px solid #b0b0b0;border-radius:2px"></div>
<svg style="left:1432px;top:673px;" width="11" height="9" viewBox="0 0 11 9"><rect x="0" y="0" width="11" height="1" fill="#666"/><rect x="0" y="3" width="11" height="1" fill="#666"/><rect x="0" y="6" width="11" height="1" fill="#666"/></svg>
<svg style="left:1432px;top:1080px;" width="10" height="6" viewBox="0 0 10 6"><path d="M0 0 H10 L5 6Z" fill="#333"/></svg>
<div style="left:400px;top:1095px;width:22px;height:23px;background:linear-gradient(#fafafa,#eeeeee);border:1px solid #c4c4c4;border-radius:3px"></div>
<svg style="left:405px;top:1101px;" width="12" height="11" viewBox="0 0 12 11"><rect x="0" y="1" width="1.5" height="9" fill="#aaa"/><path d="M6 1 L2 5.5 L6 10Z M11 1 L7 5.5 L11 10Z" fill="#aaa"/></svg>
<div style="left:424px;top:1095px;width:22px;height:23px;background:linear-gradient(#fafafa,#eeeeee);border:1px solid #c4c4c4;border-radius:3px"></div>
<svg style="left:429px;top:1101px;" width="12" height="11" viewBox="0 0 12 11"><path d="M8 1 L4 5.5 L8 10Z" fill="#aaa"/></svg>
<div style="left:448px;top:1095px;width:22px;height:23px;background:linear-gradient(#fafafa,#eeeeee);border:1px solid #c4c4c4;border-radius:3px"></div>
<svg style="left:453px;top:1101px;" width="12" height="11" viewBox="0 0 12 11"><path d="M4 1 L8 5.5 L4 10Z" fill="#aaa"/></svg>
<div style="left:472px;top:1095px;width:22px;height:23px;background:linear-gradient(#fafafa,#eeeeee);border:1px solid #c4c4c4;border-radius:3px"></div>
<svg style="left:477px;top:1101px;" width="12" height="11" viewBox="0 0 12 11"><path d="M1 1 L5 5.5 L1 10Z M6 1 L10 5.5 L6 10Z" fill="#aaa"/><rect x="10.5" y="1" width="1.5" height="9" fill="#aaa"/></svg>
<div style="left:496px;top:1095px;width:54px;height:23px;background:linear-gradient(#e4f2fb 0%,#bfe0f5 45%,#8ec8ec 55%,#a9d6f2 100%);border:1px solid #2c628f;border-radius:3px"></div>
<div class="t" style="left:223px;width:600px;text-align:center;top:1101px;font-size:12.5px;font-weight:bold;color:#000">Лист1</div>
<div style="left:552px;top:1095px;width:22px;height:23px;background:linear-gradient(#f6f6f6,#dcdcdc);border:1px solid #7a7a7a;border-radius:3px"></div>
<svg style="left:557px;top:1100px;" width="12" height="12" viewBox="0 0 12 12"><path d="M4.5 1 V10 M0.5 5.5 H8.5" stroke="#2da01a" stroke-width="2.6"/><path d="M7 11 L11 7 V11Z" fill="#2da01a"/></svg>
<div style="left:1082px;top:1096px;width:2px;height:22px;border-left:1px dashed #888"></div>
<div style="left:1084px;top:1096px;width:343px;height:22px;background:linear-gradient(#ececec,#f2f2f2 50%,#e8e8e8)"></div>
<svg style="left:1090px;top:1102px;" width="6" height="10" viewBox="0 0 6 10"><path d="M6 0 L0 5 L6 10Z" fill="#333"/></svg>
<div style="left:1106px;top:1096px;width:136px;height:22px;background:linear-gradient(#ececee 0%,#dadadc 50%,#cfcfd2 100%);border:1px solid #a8a8a8;border-radius:3px"></div>
<svg style="left:1168px;top:1103px;" width="12" height="8" viewBox="0 0 12 8"><rect x="0" y="0" width="1.4" height="8" fill="#555"/><rect x="4" y="0" width="1.4" height="8" fill="#555"/><rect x="8" y="0" width="1.4" height="8" fill="#555"/></svg>
<svg style="left:1412px;top:1102px;" width="6" height="10" viewBox="0 0 6 10"><path d="M0 0 L6 5 L0 10Z" fill="#333"/></svg>
<div style="left:1449px;top:250px;width:471px;height:871px;background:#f0f0f0"></div>
<div style="left:1449px;top:250px;width:469px;height:871px;border:1px solid #b0b0b0;border-radius:4px 4px 0 0"></div>
<div style="left:1455px;top:252px;width:460px;height:26px;background:#fff;border:1px solid #dbe3ec;border-radius:4px"></div>
<div class="t" style="left:1458px;top:258px;font-size:13px;color:#111">Инспектор</div>
<svg style="left:1873px;top:256px;" width="14" height="17" viewBox="0 0 14 17"><path d="M3 1 H11 L10 7 L13 10 H1 L4 7Z" fill="#f0f0f0" stroke="#9a9a9a"/><path d="M7 10 V17" stroke="#9a9a9a" stroke-width="1.4"/></svg>
<div style="left:1893px;top:255px;width:19px;height:19px;background:linear-gradient(#e69a8a 0%,#cf5a44 45%,#b8402c 100%);border:1px solid #6a2a20;border-radius:2px"></div>
<svg style="left:1898px;top:261px;" width="8" height="7" viewBox="0 0 8 7"><path d="M1 1 L7 6 M7 1 L1 6" stroke="#fff" stroke-width="2"/></svg>
<div style="left:1453px;top:281px;width:464px;height:839px;background:#fff;border:1px solid #8a8e96;border-radius:2px"></div>
<div style="left:1455px;top:283px;width:460px;height:835px;border:1px solid #b8bcc4"></div>
<div style="left:1462px;top:288px;width:446px;height:25px;background:#fff;border:1px solid #dde3ea;border-radius:3px"></div>
<div class="t" style="left:1465px;top:294px;font-size:13px;color:#111">Диагностика - Лист1 - Фидер - Показания и сумма по профилю(7)</div>
<svg style="left:1892px;top:298px;" width="11" height="6" viewBox="0 0 11 6"><path d="M0 0 H11 L5.5 6Z" fill="#000"/></svg>
<div style="left:1460px;top:320px;width:450px;height:173px;background:#fff;border:1px solid #8a8e96;border-right:none"></div>
<div style="left:1461px;top:321px;width:428px;height:171px;overflow:hidden"><div style="left:0;top:22px;width:428px;height:1px;background:#ececec"></div><div class="t" style="left:19px;top:5px;font-size:13px;font-weight:bold;color:#0000ee">Слева</div><div class="t" style="left:225px;top:5px;font-size:13px;color:#111">3</div><div style="left:0;top:45px;width:428px;height:1px;background:#ececec"></div><div class="t" style="left:19px;top:28px;font-size:13px;font-weight:bold;color:#0000ee">Сверху</div><div class="t" style="left:225px;top:28px;font-size:13px;color:#111">16</div><div style="left:0;top:68px;width:428px;height:1px;background:#ececec"></div><div class="t" style="left:19px;top:51px;font-size:13px;color:#111">Тип объекта</div><div class="t" style="left:225px;top:51px;font-size:13px;color:#111">Потребители</div><div style="left:0;top:91px;width:428px;height:1px;background:#ececec"></div><div class="t" style="left:19px;top:74px;font-size:13px;color:#111">Объект</div><div class="t" style="left:225px;top:74px;font-size:13px;color:#111">ЗАО НПП Вектор</div><div style="left:1px;top:92px;width:221px;height:23px;background:#cccc22"></div><div style="left:0;top:114px;width:428px;height:1px;background:#ececec"></div><div class="t" style="left:19px;top:97px;font-size:13px;color:#111">Фидер</div><div class="t" style="left:225px;top:97px;font-size:13px;color:#111">РП-1765 яч.4</div><div style="left:0;top:137px;width:428px;height:1px;background:#ececec"></div><div class="t" style="left:19px;top:120px;font-size:13px;color:#111">Тип измерения</div><div class="t" style="left:225px;top:120px;font-size:13px;color:#111">A+</div><div style="left:0;top:160px;width:428px;height:1px;background:#ececec"></div><div class="t" style="left:19px;top:143px;font-size:13px;color:#111">Дата начала</div><div class="t" style="left:225px;top:143px;font-size:13px;color:#111">01.12.2015</div><div style="left:0;top:183px;width:428px;height:1px;background:#ececec"></div><div class="t" style="left:19px;top:166px;font-size:13px;color:#111">Дата окончания</div><div class="t" style="left:225px;top:166px;font-size:13px;color:#111">02.12.2015</div><div style="left:222px;top:0;width:1px;height:172px;background:#ececec"></div></div>
<div style="left:1889px;top:320px;width:21px;height:173px;background:#f0f0f0;border:1px solid #8a8e96;border-left:none"></div>
<svg style="left:1894px;top:328px;" width="10" height="6" viewBox="0 0 10 6"><path d="M0 6 L5 0 L10 6Z" fill="#333"/></svg>
<div style="left:1890px;top:342px;width:19px;height:114px;background:linear-gradient(90deg,#f4f4f4 0%,#e8e8e8 30%,#d8d8da 60%,#c8c8cc 100%);border:1px solid #b0b0b0;border-radius:2px"></div>
<svg style="left:1894px;top:394px;" width="11" height="9" viewBox="0 0 11 9"><rect x="0" y="0" width="11" height="1" fill="#666"/><rect x="0" y="3" width="11" height="1" fill="#666"/><rect x="0" y="6" width="11" height="1" fill="#666"/></svg>
<svg style="left:1894px;top:478px;" width="10" height="6" viewBox="0 0 10 6"><path d="M0 0 H10 L5 6Z" fill="#333"/></svg>
<div style="left:1460px;top:499px;width:450px;height:2px;background:#a8acb2"></div>
<div style="left:1461px;top:501px;width:449px;height:58px;background:#efebea"></div>
<svg style="left:1494px;top:505px;" width="30" height="29" viewBox="0 0 30 29"><rect x="1" y="4" width="20" height="24" rx="2" fill="#f2b144" stroke="#c98a1f"/><rect x="4" y="7" width="14" height="18" fill="#eef2f8"/><path d="M7 2 H15 V6 H7Z" fill="#8fa5c8" stroke="#5b6f93"/><path d="M6 16 L9.5 21 L17 11" stroke="#34a420" stroke-width="3" fill="none"/><path d="M24 1 L25.5 5 L29 4 L27 7.5 L29.5 10 L26 10.5 L25 14 L23 11 L19.5 12 L21 8.5 L19 5.5 L22.5 5Z" fill="#f5a623" stroke="#e08010" stroke-width="0.6"/></svg>
<div class="t" style="left:1206px;width:600px;text-align:center;top:540px;font-size:15px;color:#111">Выполнить</div>
<svg style="left:1580px;top:505px;" width="30" height="30" viewBox="0 0 30 30"><rect x="0.5" y="0.5" width="24" height="24" rx="2" fill="#eaf1fa" stroke="#5b8fd0"/><rect x="0.5" y="0.5" width="24" height="6" rx="2" fill="#5b9ad8"/><path d="M8.5 7 V24 M16.5 7 V24 M1 12.5 H24 M1 18.5 H24" stroke="#a8c4e6"/><path d="M11 16 Q10 10 16 10 L14 13 L16 15 L19 13 Q20 19 14 19 L22 27 Q23 29 21 29 L13 21Z" fill="#9aa4b0" stroke="#5f6a78" stroke-width="0.8"/></svg>
<div class="t" style="left:1294px;width:600px;text-align:center;top:540px;font-size:15px;color:#111">Свойства</div>
<svg style="left:1665px;top:505px;" width="24" height="30" viewBox="0 0 24 30"><path d="M0.5 0.5 H16 L23 7 V29 H0.5 Z" fill="#eef3fb" stroke="#7f9bd0"/><path d="M16 0.5 V7 H23" fill="#fff" stroke="#7f9bd0"/><rect x="5" y="11.0" width="14" height="1.2" fill="#5572b0"/><rect x="5" y="13.6" width="14" height="1.2" fill="#5572b0"/><rect x="5" y="16.2" width="14" height="1.2" fill="#5572b0"/><rect x="5" y="18.8" width="14" height="1.2" fill="#5572b0"/><rect x="5" y="21.4" width="14" height="1.2" fill="#5572b0"/><rect x="5" y="24.0" width="14" height="1.2" fill="#5572b0"/></svg>
<div class="t" style="left:1377px;width:600px;text-align:center;top:540px;font-size:15px;color:#111">Просмотр</div>
<svg style="left:1734px;top:507px;" width="30" height="28" viewBox="0 0 30 28"><rect x="9" y="0.5" width="11" height="9" rx="1.5" fill="#e8e6e6" stroke="#d8d6d6"/><path d="M14.5 10 V14 M5 14 H24 M5 14 V17 M14.5 14 V17 M24 14 V17" stroke="#cfcdcd"/><rect x="0.5" y="17" width="9" height="9" rx="1.5" fill="#e8e6e6" stroke="#d8d6d6"/><rect x="10" y="17" width="9" height="9" rx="1.5" fill="#e8e6e6" stroke="#d8d6d6"/><rect x="19.5" y="17" width="9" height="9" rx="1.5" fill="#e8e6e6" stroke="#d8d6d6"/></svg>
<div class="t" style="left:1449px;width:600px;text-align:center;top:540px;font-size:15px;color:#b0aaaa">Связи</div>
<svg style="left:1810px;top:505px;" width="24" height="30" viewBox="0 0 24 30"><path d="M3 8 Q3 1 12 1 Q21 1 21 8 Q21 13 15 15 Q13 16 13 20 H9 Q9 13 13 11 Q15 10 15 8 Q15 5 12 5 Q9 5 9 9Z" fill="#5ea5e8" stroke="#3a7cc0" stroke-width="0.8"/><circle cx="11" cy="26" r="3.2" fill="#5ea5e8" stroke="#3a7cc0" stroke-width="0.8"/></svg>
<div class="t" style="left:1521px;width:600px;text-align:center;top:540px;font-size:15px;color:#111">Описание</div>
<svg style="left:1898px;top:553px;" width="7" height="4" viewBox="0 0 7 4"><path d="M0 0 H7 L3.5 4Z" fill="#000"/></svg>
<div style="left:1617px;top:563px;width:137px;height:8px;background:#fff;border:1px solid #9a9a9a"></div>
<svg style="left:1623px;top:564px;" width="10" height="6" viewBox="0 0 10 6"><path d="M1 1 L4.5 4.5 L8 1" stroke="#000" stroke-width="1.6" fill="none"/></svg>
<svg style="left:1738px;top:564px;" width="10" height="6" viewBox="0 0 10 6"><path d="M1 1 L4.5 4.5 L8 1" stroke="#000" stroke-width="1.6" fill="none"/></svg>
<svg style="left:1634px;top:567px;" width="102" height="1" viewBox="0 0 102 1"><rect x="0" y="0" width="1" height="1" fill="#3a7ad0"/><rect x="3" y="0" width="1" height="1" fill="#3a7ad0"/><rect x="6" y="0" width="1" height="1" fill="#3a7ad0"/><rect x="9" y="0" width="1" height="1" fill="#3a7ad0"/><rect x="12" y="0" width="1" height="1" fill="#3a7ad0"/><rect x="15" y="0" width="1" height="1" fill="#3a7ad0"/><rect x="18" y="0" width="1" height="1" fill="#3a7ad0"/><rect x="21" y="0" width="1" height="1" fill="#3a7ad0"/><rect x="24" y="0" width="1" height="1" fill="#3a7ad0"/><rect x="27" y="0" width="1" height="1" fill="#3a7ad0"/><rect x="30" y="0" width="1" height="1" fill="#3a7ad0"/><rect x="33" y="0" width="1" height="1" fill="#3a7ad0"/><rect x="36" y="0" width="1" height="1" fill="#3a7ad0"/><rect x="39" y="0" width="1" height="1" fill="#3a7ad0"/><rect x="42" y="0" width="1" height="1" fill="#3a7ad0"/><rect x="45" y="0" width="1" height="1" fill="#3a7ad0"/><rect x="48" y="0" width="1" height="1" fill="#3a7ad0"/><rect x="51" y="0" width="1" height="1" fill="#3a7ad0"/><rect x="54" y="0" width="1" height="1" fill="#3a7ad0"/><rect x="57" y="0" width="1" height="1" fill="#3a7ad0"/><rect x="60" y="0" width="1" height="1" fill="#3a7ad0"/><rect x="63" y="0" width="1" height="1" fill="#3a7ad0"/><rect x="66" y="0" width="1" height="1" fill="#3a7ad0"/><rect x="69" y="0" width="1" height="1" fill="#3a7ad0"/><rect x="72" y="0" width="1" height="1" fill="#3a7ad0"/><rect x="75" y="0" width="1" height="1" fill="#3a7ad0"/><rect x="78" y="0" width="1" height="1" fill="#3a7ad0"/><rect x="81" y="0" width="1" height="1" fill="#3a7ad0"/><rect x="84" y="0" width="1" height="1" fill="#3a7ad0"/><rect x="87" y="0" width="1" height="1" fill="#3a7ad0"/><rect x="90" y="0" width="1" height="1" fill="#3a7ad0"/><rect x="93" y="0" width="1" height="1" fill="#3a7ad0"/><rect x="96" y="0" width="1" height="1" fill="#3a7ad0"/><rect x="99" y="0" width="1" height="1" fill="#3a7ad0"/></svg>
<div style="left:1461px;top:575px;width:449px;height:246px;background:#fff;border:1px solid #8a8e96"></div>
<div style="left:1481px;top:577px;width:326px;height:22px;overflow:hidden"><div class="t" style="left:0;top:5px;font-size:13px;color:#111">Выполнять команду</div></div>
<div style="left:1463px;top:598px;width:445px;height:1px;background:#eeeeee"></div>
<svg style="left:1850px;top:580px;" width="16" height="16" viewBox="0 0 16 16"><rect x="0.5" y="0.5" width="15" height="15" fill="#fff" stroke="#8a8a8a"/><rect x="2" y="2" width="12" height="12" fill="#e8e9ee"/><path d="M4 8 L7 12 L12.5 3.5" stroke="#3a4f9a" stroke-width="2" fill="none"/></svg>
<div style="left:1481px;top:599px;width:326px;height:22px;overflow:hidden"><div class="t" style="left:0;top:5px;font-size:13px;color:#111">Добавлять заголовки колонок</div></div>
<div style="left:1463px;top:620px;width:445px;height:1px;background:#eeeeee"></div>
<svg style="left:1850px;top:602px;" width="16" height="16" viewBox="0 0 16 16"><rect x="0.5" y="0.5" width="15" height="15" fill="#fff" stroke="#8a8a8a"/><rect x="2" y="2" width="12" height="12" fill="#e8e9ee"/></svg>
<div style="left:1481px;top:621px;width:326px;height:22px;overflow:hidden"><div class="t" style="left:0;top:5px;font-size:13px;color:#111">Делать кросс-таблицу (транспонирование)</div></div>
<div style="left:1463px;top:642px;width:445px;height:1px;background:#eeeeee"></div>
<svg style="left:1850px;top:624px;" width="16" height="16" viewBox="0 0 16 16"><rect x="0.5" y="0.5" width="15" height="15" fill="#fff" stroke="#8a8a8a"/><rect x="2" y="2" width="12" height="12" fill="#e8e9ee"/></svg>
<div style="left:1481px;top:643px;width:326px;height:22px;overflow:hidden"><div class="t" style="left:0;top:5px;font-size:13px;color:#111">Очищать область данных&nbsp; перед выполнением</div></div>
<div style="left:1463px;top:664px;width:445px;height:1px;background:#eeeeee"></div>
<svg style="left:1850px;top:646px;" width="16" height="16" viewBox="0 0 16 16"><rect x="0.5" y="0.5" width="15" height="15" fill="#fff" stroke="#8a8a8a"/><rect x="2" y="2" width="12" height="12" fill="#e8e9ee"/></svg>
<div style="left:1481px;top:665px;width:326px;height:22px;overflow:hidden"><div class="t" style="left:0;top:5px;font-size:13px;color:#111">Очищать область команды, если нет данных</div></div>
<div style="left:1463px;top:686px;width:445px;height:1px;background:#eeeeee"></div>
<svg style="left:1850px;top:668px;" width="16" height="16" viewBox="0 0 16 16"><rect x="0.5" y="0.5" width="15" height="15" fill="#fff" stroke="#8a8a8a"/><rect x="2" y="2" width="12" height="12" fill="#e8e9ee"/><path d="M4 8 L7 12 L12.5 3.5" stroke="#3a4f9a" stroke-width="2" fill="none"/></svg>
<div style="left:1481px;top:687px;width:326px;height:22px;overflow:hidden"><div class="t" style="left:0;top:5px;font-size:13px;color:#111">Убирать дублирующие строки на основе видимых колонок</div></div>
<div style="left:1463px;top:708px;width:445px;height:1px;background:#eeeeee"></div>
<svg style="left:1850px;top:690px;" width="16" height="16" viewBox="0 0 16 16"><rect x="0.5" y="0.5" width="15" height="15" fill="#fff" stroke="#8a8a8a"/><rect x="2" y="2" width="12" height="12" fill="#e8e9ee"/></svg>
<div style="left:1481px;top:709px;width:326px;height:22px;overflow:hidden"><div class="t" style="left:0;top:5px;font-size:13px;color:#111">Вставка/удаление строк при изменение размера команды</div></div>
<div style="left:1463px;top:730px;width:445px;height:1px;background:#eeeeee"></div>
<svg style="left:1850px;top:712px;" width="16" height="16" viewBox="0 0 16 16"><rect x="0.5" y="0.5" width="15" height="15" fill="#fff" stroke="#8a8a8a"/><rect x="2" y="2" width="12" height="12" fill="#e8e9ee"/></svg>
<div style="left:1808px;top:576px;width:1px;height:154px;background:#eeeeee"></div>
<div style="left:1617px;top:824px;width:137px;height:8px;background:#fff;border:1px solid #9a9a9a"></div>
<svg style="left:1623px;top:825px;" width="10" height="6" viewBox="0 0 10 6"><path d="M1 1 L4.5 4.5 L8 1" stroke="#000" stroke-width="1.6" fill="none"/></svg>
<svg style="left:1738px;top:825px;" width="10" height="6" viewBox="0 0 10 6"><path d="M1 1 L4.5 4.5 L8 1" stroke="#000" stroke-width="1.6" fill="none"/></svg>
<svg style="left:1634px;top:828px;" width="102" height="1" viewBox="0 0 102 1"><rect x="0" y="0" width="1" height="1" fill="#3a7ad0"/><rect x="3" y="0" width="1" height="1" fill="#3a7ad0"/><rect x="6" y="0" width="1" height="1" fill="#3a7ad0"/><rect x="9" y="0" width="1" height="1" fill="#3a7ad0"/><rect x="12" y="0" width="1" height="1" fill="#3a7ad0"/><rect x="15" y="0" width="1" height="1" fill="#3a7ad0"/><rect x="18" y="0" width="1" height="1" fill="#3a7ad0"/><rect x="21" y="0" width="1" height="1" fill="#3a7ad0"/><rect x="24" y="0" width="1" height="1" fill="#3a7ad0"/><rect x="27" y="0" width="1" height="1" fill="#3a7ad0"/><rect x="30" y="0" width="1" height="1" fill="#3a7ad0"/><rect x="33" y="0" width="1" height="1" fill="#3a7ad0"/><rect x="36" y="0" width="1" height="1" fill="#3a7ad0"/><rect x="39" y="0" width="1" height="1" fill="#3a7ad0"/><rect x="42" y="0" width="1" height="1" fill="#3a7ad0"/><rect x="45" y="0" width="1" height="1" fill="#3a7ad0"/><rect x="48" y="0" width="1" height="1" fill="#3a7ad0"/><rect x="51" y="0" width="1" height="1" fill="#3a7ad0"/><rect x="54" y="0" width="1" height="1" fill="#3a7ad0"/><rect x="57" y="0" width="1" height="1" fill="#3a7ad0"/><rect x="60" y="0" width="1" height="1" fill="#3a7ad0"/><rect x="63" y="0" width="1" height="1" fill="#3a7ad0"/><rect x="66" y="0" width="1" height="1" fill="#3a7ad0"/><rect x="69" y="0" width="1" height="1" fill="#3a7ad0"/><rect x="72" y="0" width="1" height="1" fill="#3a7ad0"/><rect x="75" y="0" width="1" height="1" fill="#3a7ad0"/><rect x="78" y="0" width="1" height="1" fill="#3a7ad0"/><rect x="81" y="0" width="1" height="1" fill="#3a7ad0"/><rect x="84" y="0" width="1" height="1" fill="#3a7ad0"/><rect x="87" y="0" width="1" height="1" fill="#3a7ad0"/><rect x="90" y="0" width="1" height="1" fill="#3a7ad0"/><rect x="93" y="0" width="1" height="1" fill="#3a7ad0"/><rect x="96" y="0" width="1" height="1" fill="#3a7ad0"/><rect x="99" y="0" width="1" height="1" fill="#3a7ad0"/></svg>
<div style="left:1461px;top:837px;width:449px;height:25px;background:linear-gradient(#ffffff 0%,#f8f8f9 40%,#eceef1 100%);border:1px solid #8a8e96"></div>
<div class="t" style="left:1465px;top:844px;font-size:13px;color:#111">Набор параметров</div>
<div style="left:1810px;top:838px;width:1px;height:23px;background:#e0e0e0"></div>
<div class="t" style="left:1813px;top:844px;font-size:13px;color:#111">Действия</div>
<div style="left:1461px;top:867px;width:449px;height:2px;background:#a8acb2"></div>
<div style="left:1462px;top:870px;width:448px;height:58px;background:#efebea"></div>
<svg style="left:1484px;top:874px;" width="30" height="31" viewBox="0 0 30 31"><rect x="6.5" y="0.5" width="22" height="8" rx="2" fill="#eef3fb" stroke="#7f9bd0"/><rect x="6.5" y="11.5" width="22" height="8" rx="2" fill="#fff" stroke="#7f9bd0" stroke-dasharray="2 1.5"/><rect x="6.5" y="22.5" width="22" height="8" rx="2" fill="#eef3fb" stroke="#7f9bd0"/><path d="M0 12 L4 15.5 L0 19Z" fill="#5b8fd0"/></svg>
<div class="t" style="left:1200px;width:600px;text-align:center;top:910px;font-size:15px;color:#111">Редактор</div>
<svg style="left:1565px;top:874px;" width="31" height="31" viewBox="0 0 31 31"><rect x="0.5" y="0.5" width="22" height="29" fill="#eef3fb" stroke="#8aa0c8"/><rect x="4" y="4.0" width="14" height="1.2" fill="#5572b0"/><rect x="4" y="6.6" width="14" height="1.2" fill="#5572b0"/><rect x="4" y="9.2" width="14" height="1.2" fill="#5572b0"/><rect x="4" y="11.8" width="14" height="1.2" fill="#5572b0"/><rect x="4" y="14.4" width="14" height="1.2" fill="#5572b0"/><rect x="4" y="17.0" width="14" height="1.2" fill="#5572b0"/><rect x="4" y="21" width="12" height="4" fill="#6cc040"/><path d="M24 16 V30 M17 23 H31" stroke="#3a78c0" stroke-width="4.5"/><path d="M24 17 V29 M18 23 H30" stroke="#9cc8f0" stroke-width="2"/></svg>
<div class="t" style="left:1281px;width:600px;text-align:center;top:910px;font-size:15px;color:#111">Добавить</div>
<div style="left:1625px;top:876px;width:1px;height:50px;background:#555"></div>
<svg style="left:1652px;top:874px;" width="30" height="31" viewBox="0 0 30 31"><rect x="6.5" y="0.5" width="20" height="8" rx="2" fill="#f4f2f2" stroke="#d8d6d6"/><rect x="6.5" y="12.5" width="20" height="8" rx="2" fill="#f4f2f2" stroke="#d8d6d6"/><path d="M0 11 L4 14.5 L0 18Z" fill="#d8d6d6"/><path d="M20 21 L28 29 M28 21 L20 29" stroke="#cfcdcd" stroke-width="3"/></svg>
<div class="t" style="left:1367px;width:600px;text-align:center;top:910px;font-size:15px;color:#b0aaaa">Очистить</div>
<div style="left:1710px;top:876px;width:1px;height:50px;background:#555"></div>
<div style="left:1713px;top:871px;width:98px;height:57px;background:linear-gradient(#e4e2e2 0%,#d8d6d6 20%,#cecccc 100%);border:1px solid #5a5a5a;border-radius:4px"></div>
<svg style="left:1748px;top:876px;" width="30" height="30" viewBox="0 0 30 30"><rect x="5" y="0.5" width="20" height="9" rx="2" fill="#8fc4f0" stroke="#4a8ad0"/><rect x="10" y="13" width="20" height="9" rx="2" fill="#8fc4f0" stroke="#4a8ad0"/><circle cx="7" cy="22" r="5.5" fill="#9aa4b0" stroke="#5f6a78"/><circle cx="7" cy="22" r="2" fill="#e8e8e8"/></svg>
<div class="t" style="left:1463px;width:600px;text-align:center;top:910px;font-size:15px;color:#111">Все наборы</div>
<svg style="left:1898px;top:922px;" width="7" height="4" viewBox="0 0 7 4"><path d="M0 0 H7 L3.5 4Z" fill="#000"/></svg>
<div style="left:1617px;top:932px;width:137px;height:8px;background:#fff;border:1px solid #9a9a9a"></div>
<svg style="left:1623px;top:933px;" width="10" height="6" viewBox="0 0 10 6"><path d="M1 1 L4.5 4.5 L8 1" stroke="#000" stroke-width="1.6" fill="none"/></svg>
<svg style="left:1738px;top:933px;" width="10" height="6" viewBox="0 0 10 6"><path d="M1 1 L4.5 4.5 L8 1" stroke="#000" stroke-width="1.6" fill="none"/></svg>
<svg style="left:1634px;top:936px;" width="102" height="1" viewBox="0 0 102 1"><rect x="0" y="0" width="1" height="1" fill="#3a7ad0"/><rect x="3" y="0" width="1" height="1" fill="#3a7ad0"/><rect x="6" y="0" width="1" height="1" fill="#3a7ad0"/><rect x="9" y="0" width="1" height="1" fill="#3a7ad0"/><rect x="12" y="0" width="1" height="1" fill="#3a7ad0"/><rect x="15" y="0" width="1" height="1" fill="#3a7ad0"/><rect x="18" y="0" width="1" height="1" fill="#3a7ad0"/><rect x="21" y="0" width="1" height="1" fill="#3a7ad0"/><rect x="24" y="0" width="1" height="1" fill="#3a7ad0"/><rect x="27" y="0" width="1" height="1" fill="#3a7ad0"/><rect x="30" y="0" width="1" height="1" fill="#3a7ad0"/><rect x="33" y="0" width="1" height="1" fill="#3a7ad0"/><rect x="36" y="0" width="1" height="1" fill="#3a7ad0"/><rect x="39" y="0" width="1" height="1" fill="#3a7ad0"/><rect x="42" y="0" width="1" height="1" fill="#3a7ad0"/><rect x="45" y="0" width="1" height="1" fill="#3a7ad0"/><rect x="48" y="0" width="1" height="1" fill="#3a7ad0"/><rect x="51" y="0" width="1" height="1" fill="#3a7ad0"/><rect x="54" y="0" width="1" height="1" fill="#3a7ad0"/><rect x="57" y="0" width="1" height="1" fill="#3a7ad0"/><rect x="60" y="0" width="1" height="1" fill="#3a7ad0"/><rect x="63" y="0" width="1" height="1" fill="#3a7ad0"/><rect x="66" y="0" width="1" height="1" fill="#3a7ad0"/><rect x="69" y="0" width="1" height="1" fill="#3a7ad0"/><rect x="72" y="0" width="1" height="1" fill="#3a7ad0"/><rect x="75" y="0" width="1" height="1" fill="#3a7ad0"/><rect x="78" y="0" width="1" height="1" fill="#3a7ad0"/><rect x="81" y="0" width="1" height="1" fill="#3a7ad0"/><rect x="84" y="0" width="1" height="1" fill="#3a7ad0"/><rect x="87" y="0" width="1" height="1" fill="#3a7ad0"/><rect x="90" y="0" width="1" height="1" fill="#3a7ad0"/><rect x="93" y="0" width="1" height="1" fill="#3a7ad0"/><rect x="96" y="0" width="1" height="1" fill="#3a7ad0"/><rect x="99" y="0" width="1" height="1" fill="#3a7ad0"/></svg>
<div class="t" style="left:1464px;top:949px;font-size:13px;color:#111">Краткое описание команды:</div>
<div style="left:1464px;top:969px;width:442px;height:139px;background:#fff;border:1px solid #dde3ea;border-radius:2px"></div>
<div class="t" style="left:1467px;top:975px;font-size:13px;color:#111">Вывод начальных и конечных показаний по профилю и автотчениям</div>
<div class="t" style="left:1467px;top:992px;font-size:13px;color:#111">по фидеру</div>
<div style="left:1884px;top:971px;width:20px;height:135px;background:#f0f0f0"></div>
<svg style="left:1889px;top:981px;" width="10" height="6" viewBox="0 0 10 6"><path d="M0 6 L5 0 L10 6Z" fill="#bbb"/></svg>
<svg style="left:1889px;top:1094px;" width="10" height="6" viewBox="0 0 10 6"><path d="M0 0 H10 L5 6Z" fill="#bbb"/></svg>
<div style="left:0px;top:1122px;width:1920px;height:30px;background:#254b87"></div>
<div class="t" style="left:1670px;top:1127px;font-size:18.5px;color:#000">100%</div>
<div style="left:1730px;top:1128px;width:15px;height:15px;background:linear-gradient(#f4f4f4,#d8d8d8);border:1px solid #999;border-radius:2px"></div>
<div style="left:1734px;top:1134px;width:7px;height:2px;background:#444"></div>
<div style="left:1752px;top:1134px;width:136px;height:3px;background:#f4f4f4;border-radius:1px"></div>
<svg style="left:1815px;top:1127px;" width="10" height="16" viewBox="0 0 10 16"><path d="M1 1.5 Q1 0.5 2 0.5 H8 Q9 0.5 9 1.5 V10 L5 14 L1 10Z" fill="#e4e4e4" stroke="#8a8a8a" stroke-width="0.8"/></svg>
<div style="left:1820px;top:1146px;width:1px;height:2px;background:#111"></div>
<div style="left:1895px;top:1128px;width:15px;height:15px;background:linear-gradient(#f4f4f4,#d8d8d8);border:1px solid #999;border-radius:2px"></div>
<svg style="left:1898px;top:1131px;" width="9" height="9" viewBox="0 0 9 9"><path d="M4.5 0.5 V8.5 M0.5 4.5 H8.5" stroke="#333" stroke-width="2"/></svg>
<div style="left:0px;top:1152px;width:1920px;height:9px;background:linear-gradient(90deg,#0f4650 0%,#17606c 35%,#1a6874 50%,#114e5a 75%,#18606a 100%)"></div>
<div style="left:0px;top:1152px;width:1920px;height:1px;background:#0a2c36"></div>
<svg style="left:16px;top:1154px;" width="34" height="12" viewBox="0 0 34 12"><circle cx="17" cy="17" r="16" fill="#5a8aa0" stroke="#c8dde8" stroke-width="1.2"/></svg>
<div style="left:72px;top:1153px;width:59px;height:8px;background:linear-gradient(#b4cccc,#6c9ca4);border:1px solid #0a3038;border-bottom:none;border-radius:3px 3px 0 0"></div>
<div style="left:212px;top:1153px;width:67px;height:8px;background:linear-gradient(#b4cccc,#6c9ca4);border:1px solid #0a3038;border-bottom:none;border-radius:3px 3px 0 0"></div>
<div style="left:282px;top:1153px;width:66px;height:8px;background:linear-gradient(#b4cccc,#6c9ca4);border:1px solid #0a3038;border-bottom:none;border-radius:3px 3px 0 0"></div>
<div style="left:352px;top:1153px;width:67px;height:8px;background:linear-gradient(#b4cccc,#6c9ca4);border:1px solid #0a3038;border-bottom:none;border-radius:3px 3px 0 0"></div>
<div style="left:422px;top:1153px;width:67px;height:8px;background:linear-gradient(#b4cccc,#6c9ca4);border:1px solid #0a3038;border-bottom:none;border-radius:3px 3px 0 0"></div>
<div style="left:492px;top:1153px;width:67px;height:8px;background:linear-gradient(#b4cccc,#6c9ca4);border:1px solid #0a3038;border-bottom:none;border-radius:3px 3px 0 0"></div>
<div style="left:562px;top:1153px;width:67px;height:8px;background:linear-gradient(#e4eeee,#b8cccc);border:1px solid #0a3038;border-bottom:none;border-radius:3px 3px 0 0"></div>
<div style="left:132px;top:1153px;width:2px;height:8px;background:#3a6a74"></div>
<div style="left:157px;top:1155px;width:35px;height:6px;background:#2f8ff0;border-radius:4px 4px 0 0"></div>
<svg style="left:95px;top:1155px;" width="28" height="6" viewBox="0 0 28 6"><ellipse cx="14" cy="8" rx="10" ry="6" fill="none" stroke="#f0c020" stroke-width="2"/></svg>
<svg style="left:228px;top:1155px;" width="30" height="6" viewBox="0 0 30 6"><circle cx="15" cy="10" r="9" fill="#e03030"/></svg>
<svg style="left:300px;top:1155px;" width="30" height="6" viewBox="0 0 30 6"><circle cx="15" cy="10" r="9" fill="#3060c0" stroke="#c0d0f0"/></svg>
<div style="left:366px;top:1154px;width:36px;height:7px;background:#0020f0;border:1px solid #20a0ff"></div>
<svg style="left:440px;top:1155px;" width="30" height="6" viewBox="0 0 30 6"><circle cx="15" cy="10" r="9" fill="#3060c0" stroke="#e0e8f8"/></svg>
<svg style="left:510px;top:1155px;" width="30" height="6" viewBox="0 0 30 6"><path d="M5 6 L28 0 V6Z" fill="#2f7fe0"/></svg>
<svg style="left:578px;top:1154px;" width="36" height="7" viewBox="0 0 36 7"><rect x="0" y="1" width="30" height="4" fill="#505050"/><rect x="28" y="1" width="6" height="2" fill="#d07020"/></svg>
<div style="left:1906px;top:1153px;width:14px;height:8px;background:linear-gradient(#6a9aa0,#3a6a74);border-left:1px solid #8ab0b8;border-top:1px solid #8ab0b8"></div>
</body></html>
